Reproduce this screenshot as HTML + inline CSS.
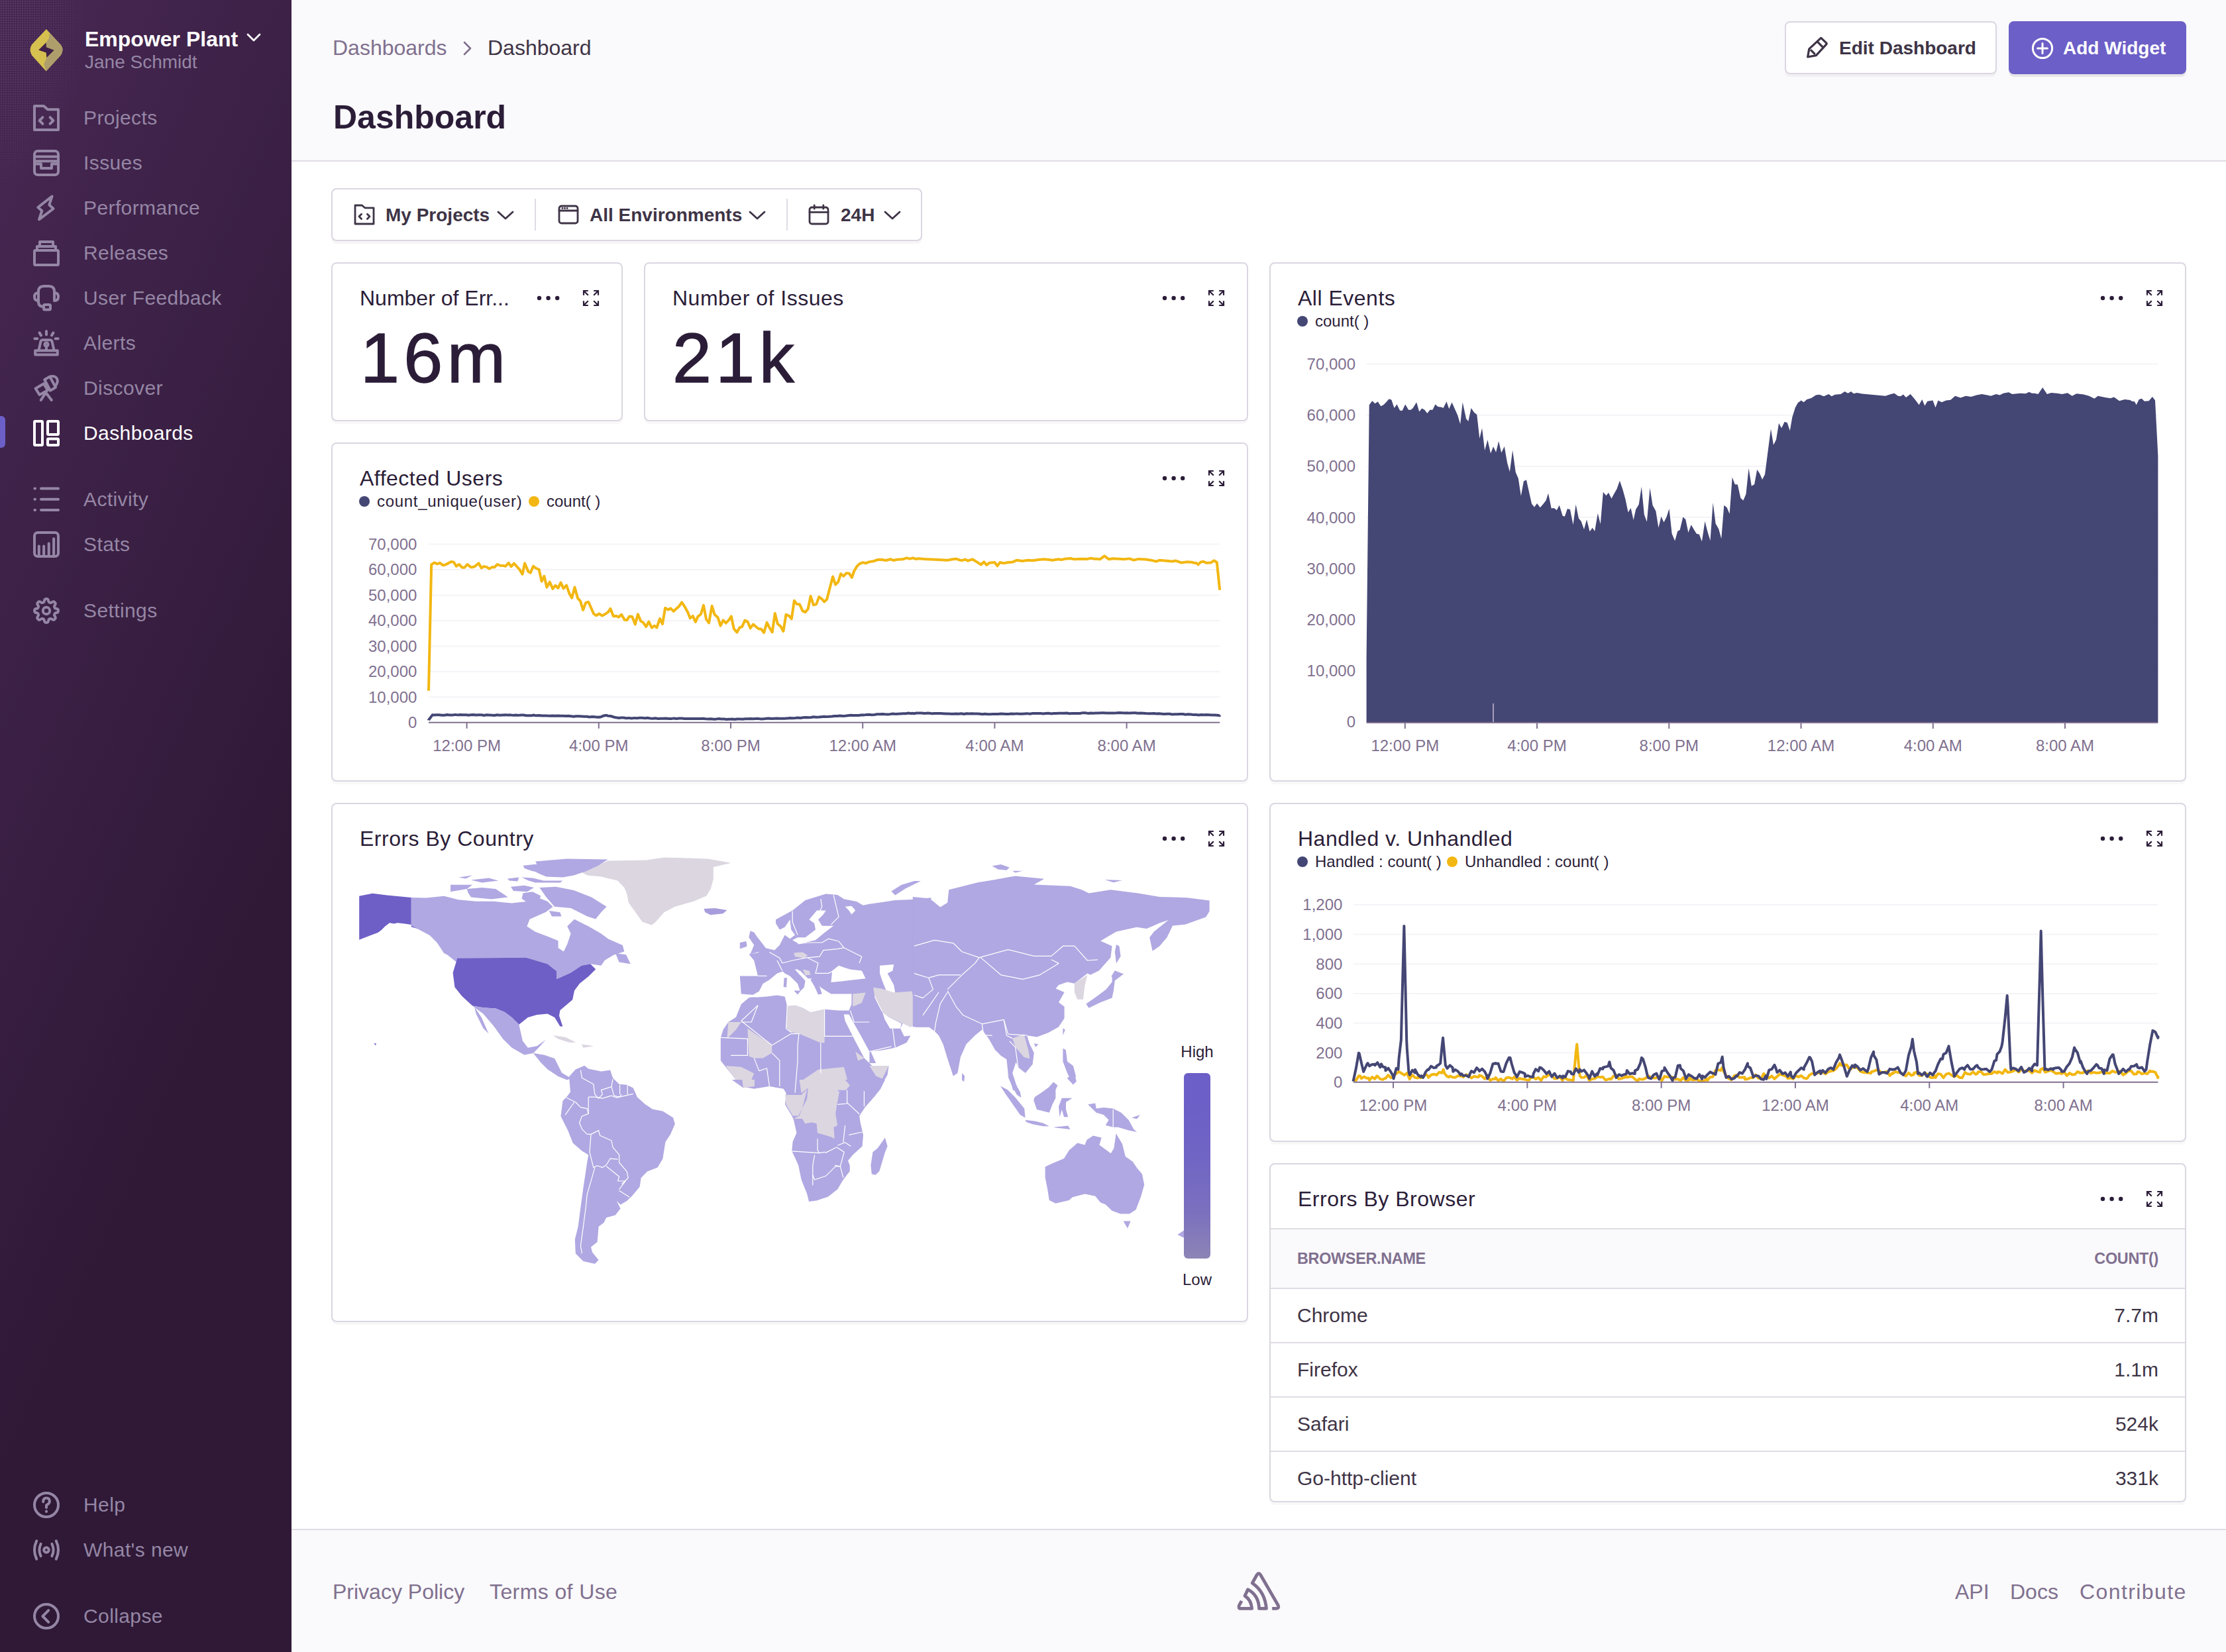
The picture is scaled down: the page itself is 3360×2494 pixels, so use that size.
<!DOCTYPE html>
<html><head><meta charset="utf-8"><style>
html,body{margin:0;padding:0;}
body{width:3360px;height:2494px;overflow:hidden;background:#fff;}
#root{position:relative;width:1680px;height:1247px;zoom:2;overflow:hidden;background:#fff;font-family:"Liberation Sans", sans-serif;}
.t{position:absolute;white-space:nowrap;line-height:1;}
@media (max-width:2500px){body{width:1680px;height:1247px;} #root{zoom:1;}}
svg{display:block;}
</style></head><body><div id="root">
<div style="position:absolute;left:0;top:0;width:220px;height:1247px;background:linear-gradient(294.17deg,#2f1937 35.57%,#452650 92.42%,#452650 92.42%);"></div><div style="position:absolute;left:0;top:0;width:120px;height:170px;background-image:radial-gradient(circle,rgba(170,150,190,0.3) 0.4px,transparent 0.55px);background-size:1.8px 1.8px;-webkit-mask-image:radial-gradient(ellipse 70px 150px at 0 0,#000 0%,rgba(0,0,0,0.6) 50%,transparent 100%);mask-image:radial-gradient(ellipse 70px 150px at 0 0,#000 0%,rgba(0,0,0,0.6) 50%,transparent 100%);"></div><svg style="position:absolute;left:22px;top:22px;overflow:visible" width="27" height="33" viewBox="0 0 27 33"><path d="M12.94 0 L24 12 Q26.5 15.6 24 19.5 L12.8 31.7 L2 19.8 Q-0.5 15.6 2 11.6 Z" fill="#D6C04F"/>
<path d="M15.37 2.87 L24 12 Q26.5 15.6 24 19.5 L12.8 31.7 L11.14 26.37 L12.83 22.56 L13.15 21.51 L18.87 15.9 L12.94 13.57 L12.83 10.18 L14.95 6.9 Z" fill="#AE9E6C"/>
<path d="M7.1 15.7 L12.83 10.18 L12.94 13.57 L18.87 15.9 L13.15 21.51 L12.83 17.8 Z" fill="#3F2149"/></svg><div class="t" style="left:64.00px;top:21.56px;font-size:16px;color:#FFFFFF;font-weight:700;">Empower Plant</div><svg style="position:absolute;left:186px;top:25px;" width="11" height="7" viewBox="0 0 11 7"><path d="M1 1 L5.5 5.5 L10 1" fill="none" stroke="#fff" stroke-width="1.4" stroke-linecap="round" stroke-linejoin="round"/></svg><div class="t" style="left:64.00px;top:40.15px;font-size:14px;color:#9586A5;font-weight:400;">Jane Schmidt</div><svg style="position:absolute;left:25px;top:79px;overflow:visible" width="20" height="20" viewBox="0 0 20 20"><path d="M1 1 H8 L11 3.6 H19 V19 H1 Z" fill="none" stroke="#9586A5" stroke-width="2" stroke-linecap="round" stroke-linejoin="round"/><path d="M7.2 9.6 L4.8 12 L7.2 14.4 M12.8 9.6 L15.2 12 L12.8 14.4" fill="none" stroke="#9586A5" stroke-width="2" stroke-linecap="round" stroke-linejoin="round"/></svg><div class="t" style="left:63.00px;top:81.30px;font-size:15px;color:#9586A5;font-weight:400;letter-spacing:0.2px">Projects</div><svg style="position:absolute;left:25px;top:113px;overflow:visible" width="20" height="20" viewBox="0 0 20 20"><rect x="1" y="1" width="18" height="18" rx="2.5" fill="none" stroke="#9586A5" stroke-width="2" stroke-linecap="round" stroke-linejoin="round"/><path d="M1 5.2 H19 M1 8.6 H19 M1 10.8 H6 V14 H14 V10.8 H19" fill="none" stroke="#9586A5" stroke-width="2" stroke-linecap="round" stroke-linejoin="round"/></svg><div class="t" style="left:63.00px;top:115.30px;font-size:15px;color:#9586A5;font-weight:400;letter-spacing:0.2px">Issues</div><svg style="position:absolute;left:25px;top:147px;overflow:visible" width="20" height="20" viewBox="0 0 20 20"><path d="M14.3 1.2 L3.66 9.5 L6.65 12.15 L4.5 18.65 L15.3 10.5 L12.15 7.66 Z" fill="none" stroke="#9586A5" stroke-width="2" stroke-linecap="round" stroke-linejoin="round"/></svg><div class="t" style="left:63.00px;top:149.30px;font-size:15px;color:#9586A5;font-weight:400;letter-spacing:0.2px">Performance</div><svg style="position:absolute;left:25px;top:181px;overflow:visible" width="20" height="20" viewBox="0 0 20 20"><rect x="1" y="8" width="18" height="11" rx="0.8" fill="none" stroke="#9586A5" stroke-width="2" stroke-linecap="round" stroke-linejoin="round"/><path d="M3 8 V5 H17 V8 M5 5 V1.5 H15 V5" fill="none" stroke="#9586A5" stroke-width="2" stroke-linecap="round" stroke-linejoin="round"/></svg><div class="t" style="left:63.00px;top:183.30px;font-size:15px;color:#9586A5;font-weight:400;letter-spacing:0.2px">Releases</div><svg style="position:absolute;left:25px;top:215px;overflow:visible" width="20" height="20" viewBox="0 0 20 20"><path d="M4 13 V5 Q4 1 8 1 H12 Q16 1 16 5 V11" fill="none" stroke="#9586A5" stroke-width="2" stroke-linecap="round" stroke-linejoin="round"/><path d="M4 6 Q1 6 1 9 Q1 12 4 12 M16 6 Q19 6 19 9 Q19 12 16 12" fill="none" stroke="#9586A5" stroke-width="2" stroke-linecap="round" stroke-linejoin="round"/><path d="M4 13 Q4 16.5 8 16.5" fill="none" stroke="#9586A5" stroke-width="2" stroke-linecap="round" stroke-linejoin="round"/><rect x="8" y="15" width="5" height="3.8" rx="0.8" fill="none" stroke="#9586A5" stroke-width="2" stroke-linecap="round" stroke-linejoin="round"/></svg><div class="t" style="left:63.00px;top:217.30px;font-size:15px;color:#9586A5;font-weight:400;letter-spacing:0.2px">User Feedback</div><svg style="position:absolute;left:25px;top:249px;overflow:visible" width="20" height="20" viewBox="0 0 20 20"><path d="M1.6 18.8 H18.4 V15.6 H1.6 Z" fill="none" stroke="#9586A5" stroke-width="2" stroke-linecap="round" stroke-linejoin="round"/><path d="M4.2 15.6 L5.7 8.8 Q6 7.6 7.2 7.6 H12.8 Q14 7.6 14.3 8.8 L15.8 15.6" fill="none" stroke="#9586A5" stroke-width="2" stroke-linecap="round" stroke-linejoin="round"/><circle cx="10" cy="11" r="1.3" fill="none" stroke="#9586A5" stroke-width="2" stroke-linecap="round" stroke-linejoin="round"/><path d="M10 12.4 V15.2 M10 1 V3.6 M4.8 2.2 L6 4.2 M15.2 2.2 L14 4.2 M1.2 6.6 H3.2 M16.8 6.6 H18.8" fill="none" stroke="#9586A5" stroke-width="2" stroke-linecap="round" stroke-linejoin="round"/></svg><div class="t" style="left:63.00px;top:251.30px;font-size:15px;color:#9586A5;font-weight:400;letter-spacing:0.2px">Alerts</div><svg style="position:absolute;left:25px;top:283px;overflow:visible" width="20" height="20" viewBox="0 0 20 20"><path d="M1.8 10.2 L8 6.6 L11 11.6 L4.8 15 Z M8.6 3.6 L12.6 1.3 L17 9.4 L13 11.8 Z M13.4 1.1 Q18.6 0.6 18.4 5.2 L17.4 7.6 M9.4 13.6 L5.9 19 M9.8 13.6 L13.9 19" fill="none" stroke="#9586A5" stroke-width="2" stroke-linecap="round" stroke-linejoin="round"/></svg><div class="t" style="left:63.00px;top:285.30px;font-size:15px;color:#9586A5;font-weight:400;letter-spacing:0.2px">Discover</div><div style="position:absolute;left:0px;top:314px;width:4px;height:24px;background:#6C5FC7;border-radius:0 3px 3px 0"></div><svg style="position:absolute;left:25px;top:317px;overflow:visible" width="20" height="20" viewBox="0 0 20 20"><rect x="1" y="1" width="6" height="18" rx="0.6" fill="none" stroke="#FFFFFF" stroke-width="2" stroke-linecap="round" stroke-linejoin="round"/><rect x="11" y="1" width="8" height="10" rx="0.6" fill="none" stroke="#FFFFFF" stroke-width="2" stroke-linecap="round" stroke-linejoin="round"/><rect x="11" y="14.2" width="8" height="4.8" rx="0.6" fill="none" stroke="#FFFFFF" stroke-width="2" stroke-linecap="round" stroke-linejoin="round"/></svg><div class="t" style="left:63.00px;top:319.30px;font-size:15px;color:#FFFFFF;font-weight:400;letter-spacing:0.2px">Dashboards</div><svg style="position:absolute;left:25px;top:367px;overflow:visible" width="20" height="20" viewBox="0 0 20 20"><path d="M6 1.8 H19 M6 9.9 H19 M6 18 H19" fill="none" stroke="#9586A5" stroke-width="2" stroke-linecap="round" stroke-linejoin="round"/><path d="M1.2 1.8 h0.3 M1.2 9.9 h0.3 M1.2 18 h0.3" fill="none" stroke="#9586A5" stroke-width="2" stroke-linecap="round" stroke-linejoin="round"/></svg><div class="t" style="left:63.00px;top:369.30px;font-size:15px;color:#9586A5;font-weight:400;letter-spacing:0.2px">Activity</div><svg style="position:absolute;left:25px;top:401px;overflow:visible" width="20" height="20" viewBox="0 0 20 20"><rect x="1" y="1" width="18" height="18" rx="2.5" fill="none" stroke="#9586A5" stroke-width="2" stroke-linecap="round" stroke-linejoin="round"/><path d="M4.4 19 V11.2 M8.07 19 V11.2 M11.85 19 V9.2 M15.57 19 V5.6" fill="none" stroke="#9586A5" stroke-width="2" stroke-linecap="round" stroke-linejoin="round"/></svg><div class="t" style="left:63.00px;top:403.30px;font-size:15px;color:#9586A5;font-weight:400;letter-spacing:0.2px">Stats</div><svg style="position:absolute;left:25px;top:451px;overflow:visible" width="20" height="20" viewBox="0 0 20 20"><circle cx="10" cy="10" r="2.6" fill="none" stroke="#9586A5" stroke-width="2" stroke-linecap="round" stroke-linejoin="round"/><path d="M10.00 1.05 L10.44 1.08 L10.87 1.20 L11.25 1.57 L11.52 2.35 L11.72 3.14 L11.96 3.53 L12.25 3.72 L12.54 3.86 L12.85 3.97 L13.19 4.04 L13.64 3.93 L14.33 3.51 L15.08 3.15 L15.61 3.17 L16.00 3.38 L16.33 3.67 L16.62 4.00 L16.83 4.39 L16.85 4.92 L16.49 5.67 L16.07 6.36 L15.96 6.81 L16.03 7.15 L16.14 7.46 L16.28 7.75 L16.47 8.04 L16.86 8.28 L17.65 8.48 L18.43 8.75 L18.80 9.13 L18.92 9.56 L18.95 10.00 L18.92 10.44 L18.80 10.87 L18.43 11.25 L17.65 11.52 L16.86 11.72 L16.47 11.96 L16.28 12.25 L16.14 12.54 L16.03 12.85 L15.96 13.19 L16.07 13.64 L16.49 14.33 L16.85 15.08 L16.83 15.61 L16.62 16.00 L16.33 16.33 L16.00 16.62 L15.61 16.83 L15.08 16.85 L14.33 16.49 L13.64 16.07 L13.19 15.96 L12.85 16.03 L12.54 16.14 L12.25 16.28 L11.96 16.47 L11.72 16.86 L11.52 17.65 L11.25 18.43 L10.87 18.80 L10.44 18.92 L10.00 18.95 L9.56 18.92 L9.13 18.80 L8.75 18.43 L8.48 17.65 L8.28 16.86 L8.04 16.47 L7.75 16.28 L7.46 16.14 L7.15 16.03 L6.81 15.96 L6.36 16.07 L5.67 16.49 L4.92 16.85 L4.39 16.83 L4.00 16.62 L3.67 16.33 L3.38 16.00 L3.17 15.61 L3.15 15.08 L3.51 14.33 L3.93 13.64 L4.04 13.19 L3.97 12.85 L3.86 12.54 L3.72 12.25 L3.53 11.96 L3.14 11.72 L2.35 11.52 L1.57 11.25 L1.20 10.87 L1.08 10.44 L1.05 10.00 L1.08 9.56 L1.20 9.13 L1.57 8.75 L2.35 8.48 L3.14 8.28 L3.53 8.04 L3.72 7.75 L3.86 7.46 L3.97 7.15 L4.04 6.81 L3.93 6.36 L3.51 5.67 L3.15 4.92 L3.17 4.39 L3.38 4.00 L3.67 3.67 L4.00 3.38 L4.39 3.17 L4.92 3.15 L5.67 3.51 L6.36 3.93 L6.81 4.04 L7.15 3.97 L7.46 3.86 L7.75 3.72 L8.04 3.53 L8.28 3.14 L8.48 2.35 L8.75 1.57 L9.13 1.20 L9.56 1.08 Z" fill="none" stroke="#9586A5" stroke-width="2" stroke-linecap="round" stroke-linejoin="round"/></svg><div class="t" style="left:63.00px;top:453.30px;font-size:15px;color:#9586A5;font-weight:400;letter-spacing:0.2px">Settings</div><svg style="position:absolute;left:25px;top:1126px;overflow:visible" width="20" height="20" viewBox="0 0 20 20"><circle cx="10" cy="10" r="9" fill="none" stroke="#9586A5" stroke-width="2" stroke-linecap="round" stroke-linejoin="round"/><path d="M7.6 7.6 Q7.6 4.8 10 4.8 Q12.4 4.8 12.4 7.4 Q12.4 9 10 10.2 V12" fill="none" stroke="#9586A5" stroke-width="2" stroke-linecap="round" stroke-linejoin="round"/><path d="M10 14.8 v0.2" fill="none" stroke="#9586A5" stroke-width="2" stroke-linecap="round" stroke-linejoin="round"/></svg><div class="t" style="left:63.00px;top:1128.30px;font-size:15px;color:#9586A5;font-weight:400;letter-spacing:0.2px">Help</div><svg style="position:absolute;left:25px;top:1160px;overflow:visible" width="20" height="20" viewBox="0 0 20 20"><circle cx="10" cy="10" r="1.9" fill="none" stroke="#9586A5" stroke-width="2" stroke-linecap="round" stroke-linejoin="round"/><path d="M5.8 5.4 Q3.6 10 5.8 14.6 M14.2 5.4 Q16.4 10 14.2 14.6 M2.6 3.2 Q-0.6 10 2.6 16.8 M17.4 3.2 Q20.6 10 17.4 16.8" fill="none" stroke="#9586A5" stroke-width="2" stroke-linecap="round" stroke-linejoin="round"/></svg><div class="t" style="left:63.00px;top:1162.30px;font-size:15px;color:#9586A5;font-weight:400;letter-spacing:0.2px">What's new</div><svg style="position:absolute;left:25px;top:1210px;overflow:visible" width="20" height="20" viewBox="0 0 20 20"><circle cx="10" cy="10" r="9" fill="none" stroke="#9586A5" stroke-width="2" stroke-linecap="round" stroke-linejoin="round"/><path d="M11.6 5.6 L7.2 10 L11.6 14.4" fill="none" stroke="#9586A5" stroke-width="2" stroke-linecap="round" stroke-linejoin="round"/></svg><div class="t" style="left:63.00px;top:1212.30px;font-size:15px;color:#9586A5;font-weight:400;letter-spacing:0.2px">Collapse</div><div style="position:absolute;left:220px;top:0px;width:1460px;height:121px;background:#FAF9FB;border-bottom:1px solid #E0DCE5"></div><div class="t" style="left:251.00px;top:27.96px;font-size:16px;color:#80708F;font-weight:400;">Dashboards</div><svg style="position:absolute;left:349px;top:31px;" width="8" height="11" viewBox="0 0 8 11"><path d="M1.5 1 L6 5.5 L1.5 10" fill="none" stroke="#80708F" stroke-width="1.3" stroke-linecap="round" stroke-linejoin="round"/></svg><div class="t" style="left:368.00px;top:27.96px;font-size:16px;color:#3E3446;font-weight:400;">Dashboard</div><div class="t" style="left:251.50px;top:76.04px;font-size:25px;color:#2B1D38;font-weight:700;">Dashboard</div><div style="position:absolute;left:1347px;top:16px;width:160px;height:40px;background:#fff;border:1px solid #DBD6E1;border-radius:4px;box-sizing:border-box;box-shadow:0 2px 0 rgba(43,34,51,0.04)"></div><svg style="position:absolute;left:1363px;top:28px;overflow:visible" width="17" height="17" viewBox="0 0 17 17"><path d="M1.32 15 L2.38 8.95 L11 0.9 Q11.3 0.6 11.7 0.9 L15.5 4.6 Q15.8 5 15.5 5.3 L7.68 13.82 Z M3.44 9.58 L6.83 12.97 M8.95 3.86 L12.55 7.47" fill="none" stroke="#3E3446" stroke-width="1.6" stroke-linejoin="round"/></svg><div class="t" style="left:1388.00px;top:29.65px;font-size:14px;color:#3E3446;font-weight:700;">Edit Dashboard</div><div style="position:absolute;left:1516px;top:16px;width:134px;height:40px;background:#6C5FC7;border-radius:4px;box-shadow:0 2px 0 rgba(0,0,0,0.08)"></div><svg style="position:absolute;left:1533px;top:28px;" width="17" height="17" viewBox="0 0 17 17"><circle cx="8.5" cy="8.5" r="7.3" fill="none" stroke="#fff" stroke-width="1.5"/><path d="M8.5 4.8 V12.2 M4.8 8.5 H12.2" fill="none" stroke="#fff" stroke-width="1.5" stroke-linecap="round"/></svg><div class="t" style="left:1557.00px;top:29.65px;font-size:14px;color:#FFFFFF;font-weight:700;">Add Widget</div><div style="position:absolute;left:250px;top:142px;width:446px;height:40px;background:#fff;border:1px solid #DBD6E1;border-radius:4px;box-sizing:border-box;box-shadow:0 2px 0 rgba(43,34,51,0.04)"></div><svg style="position:absolute;left:267px;top:154px;" width="16" height="16" viewBox="0 0 16 16"><path d="M1 1 H6.2 L8.4 2.9 H15 V15 H1 Z" fill="none" stroke="#3E3446" stroke-width="1.4" stroke-linecap="round" stroke-linejoin="round"/><path d="M5.8 7.6 L4 9.4 L5.8 11.2 M10.2 7.6 L12 9.4 L10.2 11.2" fill="none" stroke="#3E3446" stroke-width="1.4" stroke-linecap="round" stroke-linejoin="round"/></svg><div class="t" style="left:291.00px;top:155.55px;font-size:14px;color:#3E3446;font-weight:700;">My Projects</div><svg style="position:absolute;left:375px;top:159px;" width="13" height="7" viewBox="0 0 13 7"><path d="M1 1 L6.5 6 L12 1" fill="none" stroke="#3E3446" stroke-width="1.4" stroke-linecap="round" stroke-linejoin="round"/></svg><div style="position:absolute;left:403.5px;top:150px;width:1px;height:24px;background:#E0DCE5"></div><svg style="position:absolute;left:421px;top:154px;" width="16" height="16" viewBox="0 0 16 16"><rect x="1" y="1.5" width="14" height="13" rx="1.8" fill="none" stroke="#3E3446" stroke-width="1.4" stroke-linecap="round" stroke-linejoin="round"/><path d="M1 5 H15" fill="none" stroke="#3E3446" stroke-width="1.4" stroke-linecap="round" stroke-linejoin="round"/><path d="M3.4 3.2 h0.1 M5.2 3.2 h0.1 M7 3.2 h0.1" fill="none" stroke="#3E3446" stroke-width="1.4" stroke-linecap="round" stroke-linejoin="round"/></svg><div class="t" style="left:445.00px;top:155.55px;font-size:14px;color:#3E3446;font-weight:700;">All Environments</div><svg style="position:absolute;left:565px;top:159px;" width="13" height="7" viewBox="0 0 13 7"><path d="M1 1 L6.5 6 L12 1" fill="none" stroke="#3E3446" stroke-width="1.4" stroke-linecap="round" stroke-linejoin="round"/></svg><div style="position:absolute;left:593.5px;top:150px;width:1px;height:24px;background:#E0DCE5"></div><svg style="position:absolute;left:610px;top:154px;" width="16" height="16" viewBox="0 0 16 16"><rect x="1" y="2.5" width="14" height="12.5" rx="1.8" fill="none" stroke="#3E3446" stroke-width="1.4" stroke-linecap="round" stroke-linejoin="round"/><path d="M1 6.2 H15 M4.6 1 V3.6 M11.4 1 V3.6" fill="none" stroke="#3E3446" stroke-width="1.4" stroke-linecap="round" stroke-linejoin="round"/></svg><div class="t" style="left:634.50px;top:155.55px;font-size:14px;color:#3E3446;font-weight:700;">24H</div><svg style="position:absolute;left:667px;top:159px;" width="13" height="7" viewBox="0 0 13 7"><path d="M1 1 L6.5 6 L12 1" fill="none" stroke="#3E3446" stroke-width="1.4" stroke-linecap="round" stroke-linejoin="round"/></svg><div style="position:absolute;left:250px;top:198px;width:220px;height:120px;background:#fff;border:1px solid #DBD6E1;border-radius:4px;box-sizing:border-box;box-shadow:0 2px 0 rgba(43,34,51,0.03)"></div><div class="t" style="left:271.50px;top:217.06px;font-size:16px;color:#2B1D38;font-weight:400;letter-spacing:0px">Number of Err...</div><svg style="position:absolute;left:404px;top:221px" width="20" height="8" viewBox="0 0 20 8"><circle cx="3" cy="4" r="1.6" fill="#2B1D38"/><circle cx="9.8" cy="4" r="1.6" fill="#2B1D38"/><circle cx="16.6" cy="4" r="1.6" fill="#2B1D38"/></svg><svg style="position:absolute;left:439px;top:218px" width="14" height="14" viewBox="0 0 14 14"><path d="M1.5 4.9 V1.5 H4.9 M1.5 1.5 L4.9 4.9 M12.5 4.9 V1.5 H9.1 M12.5 1.5 L9.1 4.9 M1.5 9.1 V12.5 H4.9 M1.5 12.5 L4.9 9.1 M12.5 9.1 V12.5 H9.1 M12.5 12.5 L9.1 9.1" fill="none" stroke="#2B1D38" stroke-width="1.1"/></svg><div class="t" style="left:272.00px;top:243.74px;font-size:53px;color:#2B1D38;font-weight:400;letter-spacing:3.2px;-webkit-text-stroke:0.7px #2B1D38">16m</div><div style="position:absolute;left:486px;top:198px;width:456px;height:120px;background:#fff;border:1px solid #DBD6E1;border-radius:4px;box-sizing:border-box;box-shadow:0 2px 0 rgba(43,34,51,0.03)"></div><div class="t" style="left:507.50px;top:217.06px;font-size:16px;color:#2B1D38;font-weight:400;letter-spacing:0.25px">Number of Issues</div><svg style="position:absolute;left:876px;top:221px" width="20" height="8" viewBox="0 0 20 8"><circle cx="3" cy="4" r="1.6" fill="#2B1D38"/><circle cx="9.8" cy="4" r="1.6" fill="#2B1D38"/><circle cx="16.6" cy="4" r="1.6" fill="#2B1D38"/></svg><svg style="position:absolute;left:911px;top:218px" width="14" height="14" viewBox="0 0 14 14"><path d="M1.5 4.9 V1.5 H4.9 M1.5 1.5 L4.9 4.9 M12.5 4.9 V1.5 H9.1 M12.5 1.5 L9.1 4.9 M1.5 9.1 V12.5 H4.9 M1.5 12.5 L4.9 9.1 M12.5 9.1 V12.5 H9.1 M12.5 12.5 L9.1 9.1" fill="none" stroke="#2B1D38" stroke-width="1.1"/></svg><div class="t" style="left:507.50px;top:243.74px;font-size:53px;color:#2B1D38;font-weight:400;letter-spacing:3.2px;-webkit-text-stroke:0.7px #2B1D38">21k</div><div style="position:absolute;left:958px;top:198px;width:692px;height:392px;background:#fff;border:1px solid #DBD6E1;border-radius:4px;box-sizing:border-box;box-shadow:0 2px 0 rgba(43,34,51,0.03)"></div><div class="t" style="left:979.50px;top:217.06px;font-size:16px;color:#2B1D38;font-weight:400;letter-spacing:0.25px">All Events</div><svg style="position:absolute;left:1584px;top:221px" width="20" height="8" viewBox="0 0 20 8"><circle cx="3" cy="4" r="1.6" fill="#2B1D38"/><circle cx="9.8" cy="4" r="1.6" fill="#2B1D38"/><circle cx="16.6" cy="4" r="1.6" fill="#2B1D38"/></svg><svg style="position:absolute;left:1619px;top:218px" width="14" height="14" viewBox="0 0 14 14"><path d="M1.5 4.9 V1.5 H4.9 M1.5 1.5 L4.9 4.9 M12.5 4.9 V1.5 H9.1 M12.5 1.5 L9.1 4.9 M1.5 9.1 V12.5 H4.9 M1.5 12.5 L4.9 9.1 M12.5 9.1 V12.5 H9.1 M12.5 12.5 L9.1 9.1" fill="none" stroke="#2B1D38" stroke-width="1.1"/></svg><div style="position:absolute;left:979px;top:238.5px;width:8px;height:8px;border-radius:50%;background:#444674"></div><div class="t" style="left:992.50px;top:236.34px;font-size:12px;color:#2B1D38;font-weight:400;">count( )</div><div style="position:absolute;left:250px;top:334px;width:692px;height:256px;background:#fff;border:1px solid #DBD6E1;border-radius:4px;box-sizing:border-box;box-shadow:0 2px 0 rgba(43,34,51,0.03)"></div><div class="t" style="left:271.50px;top:353.06px;font-size:16px;color:#2B1D38;font-weight:400;letter-spacing:0.25px">Affected Users</div><svg style="position:absolute;left:876px;top:357px" width="20" height="8" viewBox="0 0 20 8"><circle cx="3" cy="4" r="1.6" fill="#2B1D38"/><circle cx="9.8" cy="4" r="1.6" fill="#2B1D38"/><circle cx="16.6" cy="4" r="1.6" fill="#2B1D38"/></svg><svg style="position:absolute;left:911px;top:354px" width="14" height="14" viewBox="0 0 14 14"><path d="M1.5 4.9 V1.5 H4.9 M1.5 1.5 L4.9 4.9 M12.5 4.9 V1.5 H9.1 M12.5 1.5 L9.1 4.9 M1.5 9.1 V12.5 H4.9 M1.5 12.5 L4.9 9.1 M12.5 9.1 V12.5 H9.1 M12.5 12.5 L9.1 9.1" fill="none" stroke="#2B1D38" stroke-width="1.1"/></svg><div style="position:absolute;left:271px;top:374.5px;width:8px;height:8px;border-radius:50%;background:#444674"></div><div class="t" style="left:284.50px;top:372.34px;font-size:12px;color:#2B1D38;font-weight:400;letter-spacing:0.35px">count_unique(user)</div><div style="position:absolute;left:399px;top:374.5px;width:8px;height:8px;border-radius:50%;background:#F2B712"></div><div class="t" style="left:412.50px;top:372.34px;font-size:12px;color:#2B1D38;font-weight:400;">count( )</div><div style="position:absolute;left:250px;top:606px;width:692px;height:392px;background:#fff;border:1px solid #DBD6E1;border-radius:4px;box-sizing:border-box;box-shadow:0 2px 0 rgba(43,34,51,0.03)"></div><div class="t" style="left:271.50px;top:625.06px;font-size:16px;color:#2B1D38;font-weight:400;letter-spacing:0.25px">Errors By Country</div><svg style="position:absolute;left:876px;top:629px" width="20" height="8" viewBox="0 0 20 8"><circle cx="3" cy="4" r="1.6" fill="#2B1D38"/><circle cx="9.8" cy="4" r="1.6" fill="#2B1D38"/><circle cx="16.6" cy="4" r="1.6" fill="#2B1D38"/></svg><svg style="position:absolute;left:911px;top:626px" width="14" height="14" viewBox="0 0 14 14"><path d="M1.5 4.9 V1.5 H4.9 M1.5 1.5 L4.9 4.9 M12.5 4.9 V1.5 H9.1 M12.5 1.5 L9.1 4.9 M1.5 9.1 V12.5 H4.9 M1.5 12.5 L4.9 9.1 M12.5 9.1 V12.5 H9.1 M12.5 12.5 L9.1 9.1" fill="none" stroke="#2B1D38" stroke-width="1.1"/></svg><div style="position:absolute;left:958px;top:606px;width:692px;height:256px;background:#fff;border:1px solid #DBD6E1;border-radius:4px;box-sizing:border-box;box-shadow:0 2px 0 rgba(43,34,51,0.03)"></div><div class="t" style="left:979.50px;top:625.06px;font-size:16px;color:#2B1D38;font-weight:400;letter-spacing:0.25px">Handled v. Unhandled</div><svg style="position:absolute;left:1584px;top:629px" width="20" height="8" viewBox="0 0 20 8"><circle cx="3" cy="4" r="1.6" fill="#2B1D38"/><circle cx="9.8" cy="4" r="1.6" fill="#2B1D38"/><circle cx="16.6" cy="4" r="1.6" fill="#2B1D38"/></svg><svg style="position:absolute;left:1619px;top:626px" width="14" height="14" viewBox="0 0 14 14"><path d="M1.5 4.9 V1.5 H4.9 M1.5 1.5 L4.9 4.9 M12.5 4.9 V1.5 H9.1 M12.5 1.5 L9.1 4.9 M1.5 9.1 V12.5 H4.9 M1.5 12.5 L4.9 9.1 M12.5 9.1 V12.5 H9.1 M12.5 12.5 L9.1 9.1" fill="none" stroke="#2B1D38" stroke-width="1.1"/></svg><div style="position:absolute;left:979px;top:646.5px;width:8px;height:8px;border-radius:50%;background:#444674"></div><div class="t" style="left:992.50px;top:644.34px;font-size:12px;color:#2B1D38;font-weight:400;">Handled : count( )</div><div style="position:absolute;left:1092px;top:646.5px;width:8px;height:8px;border-radius:50%;background:#F2B712"></div><div class="t" style="left:1105.50px;top:644.34px;font-size:12px;color:#2B1D38;font-weight:400;">Unhandled : count( )</div><div style="position:absolute;left:958px;top:878px;width:692px;height:256px;background:#fff;border:1px solid #DBD6E1;border-radius:4px;box-sizing:border-box;box-shadow:0 2px 0 rgba(43,34,51,0.03)"></div><div class="t" style="left:979.50px;top:897.06px;font-size:16px;color:#2B1D38;font-weight:400;letter-spacing:0.25px">Errors By Browser</div><svg style="position:absolute;left:1584px;top:901px" width="20" height="8" viewBox="0 0 20 8"><circle cx="3" cy="4" r="1.6" fill="#2B1D38"/><circle cx="9.8" cy="4" r="1.6" fill="#2B1D38"/><circle cx="16.6" cy="4" r="1.6" fill="#2B1D38"/></svg><svg style="position:absolute;left:1619px;top:898px" width="14" height="14" viewBox="0 0 14 14"><path d="M1.5 4.9 V1.5 H4.9 M1.5 1.5 L4.9 4.9 M12.5 4.9 V1.5 H9.1 M12.5 1.5 L9.1 4.9 M1.5 9.1 V12.5 H4.9 M1.5 12.5 L4.9 9.1 M12.5 9.1 V12.5 H9.1 M12.5 12.5 L9.1 9.1" fill="none" stroke="#2B1D38" stroke-width="1.1"/></svg><svg style="position:absolute;left:0;top:0;overflow:visible" width="1680" height="1247" viewBox="0 0 1680 1247" font-family="Liberation Sans, sans-serif"><text x="1023.00" y="549.20" text-anchor="end" font-size="12" fill="#80708F">0</text><path d="M1031.30 506.39 H1628.70" stroke="#F5F3F7" stroke-width="1" fill="none"/><text x="1023.00" y="510.59" text-anchor="end" font-size="12" fill="#80708F">10,000</text><path d="M1031.30 467.78 H1628.70" stroke="#F5F3F7" stroke-width="1" fill="none"/><text x="1023.00" y="471.98" text-anchor="end" font-size="12" fill="#80708F">20,000</text><path d="M1031.30 429.17 H1628.70" stroke="#F5F3F7" stroke-width="1" fill="none"/><text x="1023.00" y="433.37" text-anchor="end" font-size="12" fill="#80708F">30,000</text><path d="M1031.30 390.56 H1628.70" stroke="#F5F3F7" stroke-width="1" fill="none"/><text x="1023.00" y="394.76" text-anchor="end" font-size="12" fill="#80708F">40,000</text><path d="M1031.30 351.95 H1628.70" stroke="#F5F3F7" stroke-width="1" fill="none"/><text x="1023.00" y="356.15" text-anchor="end" font-size="12" fill="#80708F">50,000</text><path d="M1031.30 313.34 H1628.70" stroke="#F5F3F7" stroke-width="1" fill="none"/><text x="1023.00" y="317.54" text-anchor="end" font-size="12" fill="#80708F">60,000</text><path d="M1031.30 274.73 H1628.70" stroke="#F5F3F7" stroke-width="1" fill="none"/><text x="1023.00" y="278.93" text-anchor="end" font-size="12" fill="#80708F">70,000</text><path d="M1031.30 496.73 L1033.37 305.61 L1035.66 302.64 L1037.82 304.66 L1039.84 303.18 L1042.13 306.68 L1044.15 305.61 L1046.17 303.58 L1048.33 301.16 L1050.22 301.83 L1052.24 308.03 L1054.26 305.20 L1056.55 309.92 L1058.30 310.05 L1060.59 305.20 L1063.02 309.38 L1064.77 309.38 L1066.39 308.03 L1069.08 303.58 L1071.11 310.73 L1073.13 308.30 L1075.15 309.38 L1077.17 311.94 L1079.19 309.38 L1081.21 309.38 L1083.23 305.20 L1085.26 306.95 L1087.95 307.36 L1089.30 308.03 L1091.73 303.18 L1093.61 308.57 L1095.77 303.72 L1100.08 313.42 L1102.10 320.16 L1103.85 303.58 L1106.55 316.12 L1108.17 318.01 L1110.32 308.03 L1112.48 311.27 L1114.64 313.02 L1116.66 330.94 L1118.54 323.13 L1120.57 339.97 L1122.72 332.02 L1125.01 342.26 L1127.04 337.14 L1129.06 341.32 L1131.08 332.96 L1133.10 341.73 L1135.39 337.01 L1137.55 349.41 L1139.43 356.15 L1141.59 339.84 L1143.88 356.55 L1145.90 361.13 L1147.92 374.34 L1149.95 363.29 L1151.97 362.21 L1156.01 380.40 L1158.03 382.70 L1160.05 380.00 L1162.35 383.10 L1164.77 380.40 L1166.79 377.71 L1168.54 372.32 L1170.84 383.77 L1172.86 383.50 L1174.88 385.12 L1176.90 381.35 L1179.33 389.43 L1180.94 389.84 L1182.96 384.04 L1184.99 384.58 L1187.28 396.17 L1189.30 380.81 L1191.46 391.19 L1193.34 393.48 L1195.50 399.68 L1197.52 392.13 L1199.81 401.29 L1201.83 398.33 L1203.58 401.02 L1205.88 387.55 L1207.90 395.63 L1209.92 371.37 L1212.21 374.07 L1213.96 371.91 L1216.25 376.36 L1218.01 372.99 L1220.30 368.95 L1222.45 362.88 L1224.74 369.62 L1226.77 377.04 L1228.79 386.74 L1230.81 383.50 L1232.83 392.53 L1234.58 384.45 L1236.87 380.81 L1238.89 367.33 L1240.92 388.49 L1242.94 393.88 L1245.23 368.27 L1247.25 381.35 L1249.68 385.80 L1251.70 398.33 L1253.72 389.84 L1255.74 394.29 L1257.76 390.24 L1259.78 384.04 L1261.81 402.91 L1264.10 408.30 L1266.12 401.02 L1267.87 399.95 L1270.16 390.24 L1272.18 392.13 L1274.20 401.97 L1276.36 396.17 L1278.38 399.68 L1280.40 402.91 L1282.43 403.32 L1284.45 408.71 L1286.74 393.48 L1288.76 401.56 L1290.78 408.03 L1292.80 379.46 L1294.82 395.23 L1297.12 399.27 L1299.14 406.68 L1301.16 381.35 L1303.32 383.10 L1305.34 387.82 L1307.36 360.19 L1309.38 365.58 L1311.40 365.71 L1313.69 375.96 L1315.71 377.71 L1317.74 372.99 L1319.76 353.45 L1321.91 366.93 L1324.07 365.58 L1326.09 354.53 L1328.11 357.49 L1330.00 361.94 L1332.02 358.17 L1336.47 323.80 L1338.49 335.93 L1340.51 331.89 L1342.53 319.49 L1344.56 323.13 L1346.85 318.41 L1348.87 319.08 L1350.89 325.15 L1352.64 315.04 L1354.93 307.63 L1356.95 303.99 L1359.38 302.24 L1361.27 303.58 L1363.69 301.56 L1367.06 300.49 L1370.43 298.19 L1373.13 297.92 L1376.50 299.14 L1380.13 297.52 L1382.29 299.14 L1384.99 297.92 L1389.30 297.52 L1392.26 295.50 L1394.69 296.85 L1396.98 295.50 L1399.00 297.12 L1401.43 296.44 L1405.47 297.25 L1410.86 297.79 L1416.25 298.19 L1422.99 298.87 L1427.04 297.52 L1429.73 296.85 L1432.43 298.87 L1434.45 299.14 L1436.47 297.79 L1438.49 299.95 L1441.86 297.52 L1445.23 301.56 L1448.33 305.61 L1450.62 301.56 L1452.64 306.28 L1454.66 302.91 L1458.71 302.24 L1460.73 307.63 L1462.75 302.24 L1465.44 303.58 L1468.81 302.24 L1472.18 301.83 L1475.55 298.87 L1479.60 300.22 L1483.64 298.87 L1487.68 299.54 L1491.73 298.19 L1495.77 297.52 L1499.81 298.19 L1502.51 298.87 L1506.55 297.52 L1509.25 298.19 L1511.94 296.85 L1515.98 296.17 L1518.68 297.52 L1524.74 296.85 L1528.79 297.12 L1531.48 295.90 L1533.50 296.85 L1535.53 296.85 L1538.22 297.52 L1541.59 292.53 L1544.96 297.52 L1548.06 296.44 L1552.37 296.85 L1556.42 297.52 L1560.46 296.58 L1563.83 298.87 L1567.20 297.12 L1572.59 297.79 L1576.63 298.87 L1580.67 300.89 L1583.37 298.87 L1588.76 299.95 L1592.80 300.62 L1595.50 299.81 L1599.54 302.64 L1603.58 301.56 L1607.63 301.97 L1608.98 302.91 L1611.00 303.18 L1612.35 305.61 L1614.37 301.56 L1616.39 300.89 L1618.41 302.91 L1621.78 302.64 L1624.47 299.54 L1626.50 302.24 L1628.70 344.21 L1628.70 545.0 L1031.30 545.0 Z" fill="#444674"/><path d="M1127 531 V545" stroke="#A99DBB" stroke-width="1" fill="none"/><path d="M1031.30 545.50 H1628.70" stroke="#80708F" stroke-width="1" fill="none"/><path d="M1060.40 545.50 V550.00" stroke="#80708F" stroke-width="1" fill="none"/><text x="1060.40" y="567.00" text-anchor="middle" font-size="12" fill="#80708F">12:00 PM</text><path d="M1160.02 545.50 V550.00" stroke="#80708F" stroke-width="1" fill="none"/><text x="1160.02" y="567.00" text-anchor="middle" font-size="12" fill="#80708F">4:00 PM</text><path d="M1259.64 545.50 V550.00" stroke="#80708F" stroke-width="1" fill="none"/><text x="1259.64" y="567.00" text-anchor="middle" font-size="12" fill="#80708F">8:00 PM</text><path d="M1359.26 545.50 V550.00" stroke="#80708F" stroke-width="1" fill="none"/><text x="1359.26" y="567.00" text-anchor="middle" font-size="12" fill="#80708F">12:00 AM</text><path d="M1458.88 545.50 V550.00" stroke="#80708F" stroke-width="1" fill="none"/><text x="1458.88" y="567.00" text-anchor="middle" font-size="12" fill="#80708F">4:00 AM</text><path d="M1558.50 545.50 V550.00" stroke="#80708F" stroke-width="1" fill="none"/><text x="1558.50" y="567.00" text-anchor="middle" font-size="12" fill="#80708F">8:00 AM</text><text x="314.70" y="549.60" text-anchor="end" font-size="12" fill="#80708F">0</text><path d="M323.50 526.17 H920.60" stroke="#F5F3F7" stroke-width="1" fill="none"/><text x="314.70" y="530.37" text-anchor="end" font-size="12" fill="#80708F">10,000</text><path d="M323.50 506.94 H920.60" stroke="#F5F3F7" stroke-width="1" fill="none"/><text x="314.70" y="511.14" text-anchor="end" font-size="12" fill="#80708F">20,000</text><path d="M323.50 487.71 H920.60" stroke="#F5F3F7" stroke-width="1" fill="none"/><text x="314.70" y="491.91" text-anchor="end" font-size="12" fill="#80708F">30,000</text><path d="M323.50 468.48 H920.60" stroke="#F5F3F7" stroke-width="1" fill="none"/><text x="314.70" y="472.68" text-anchor="end" font-size="12" fill="#80708F">40,000</text><path d="M323.50 449.25 H920.60" stroke="#F5F3F7" stroke-width="1" fill="none"/><text x="314.70" y="453.45" text-anchor="end" font-size="12" fill="#80708F">50,000</text><path d="M323.50 430.02 H920.60" stroke="#F5F3F7" stroke-width="1" fill="none"/><text x="314.70" y="434.22" text-anchor="end" font-size="12" fill="#80708F">60,000</text><path d="M323.50 410.79 H920.60" stroke="#F5F3F7" stroke-width="1" fill="none"/><text x="314.70" y="414.99" text-anchor="end" font-size="12" fill="#80708F">70,000</text><path d="M323.50 543.61 L323.50 543.49 L325.49 540.80 L326.35 539.67 L327.48 539.73 L329.47 539.62 L331.46 539.61 L333.45 539.87 L335.44 539.90 L337.43 539.52 L339.42 539.78 L341.41 539.80 L343.40 539.44 L345.39 539.69 L347.38 539.52 L349.37 539.68 L351.36 539.61 L352.33 539.67 L353.36 539.84 L355.35 539.63 L357.34 539.53 L359.33 539.71 L361.32 539.62 L363.31 539.66 L365.30 539.95 L367.29 539.65 L369.28 539.74 L371.27 539.88 L373.26 540.02 L375.25 539.65 L377.24 539.84 L379.23 539.74 L381.22 539.68 L383.21 539.77 L385.20 539.68 L387.19 539.94 L389.18 539.76 L391.17 539.94 L393.16 539.73 L395.15 539.76 L397.14 540.14 L399.13 540.13 L401.12 540.11 L403.11 539.77 L403.32 539.99 L405.10 540.07 L407.09 540.03 L409.08 540.23 L411.07 540.19 L413.06 540.30 L415.06 540.36 L417.05 540.31 L419.04 540.36 L421.03 540.26 L423.02 540.42 L425.01 540.35 L427.00 540.44 L428.99 540.43 L430.98 540.63 L432.97 540.91 L434.96 540.64 L436.95 540.65 L438.94 540.73 L440.93 540.93 L442.92 540.92 L444.91 541.20 L446.90 540.97 L448.89 541.14 L450.88 541.32 L452.42 541.26 L452.87 541.36 L454.86 540.52 L456.85 539.99 L457.81 539.99 L458.84 540.40 L460.83 540.50 L462.82 541.11 L464.81 541.66 L466.68 541.90 L466.80 542.00 L468.79 541.80 L470.78 541.77 L472.77 542.18 L474.77 541.94 L476.76 542.22 L478.75 541.94 L480.74 542.14 L482.73 541.91 L484.72 541.88 L486.71 542.12 L488.70 541.92 L490.69 542.26 L492.68 542.39 L494.67 542.17 L496.66 542.45 L498.65 542.40 L500.64 542.33 L502.63 542.25 L504.62 542.49 L506.61 542.56 L508.60 542.20 L510.59 542.48 L512.58 542.21 L514.57 542.26 L516.56 542.52 L518.55 542.50 L520.54 542.50 L522.53 542.46 L524.52 542.51 L526.51 542.55 L528.50 542.54 L530.49 542.42 L532.49 542.64 L534.48 542.70 L536.47 542.59 L538.46 542.83 L540.45 542.82 L542.44 542.53 L544.43 542.77 L546.42 542.78 L548.41 543.05 L550.40 542.88 L551.25 542.85 L552.39 542.80 L554.38 543.03 L556.37 542.72 L558.36 542.69 L560.35 542.92 L562.34 542.63 L564.33 542.67 L566.32 542.54 L568.31 542.66 L570.30 542.47 L572.29 542.43 L574.28 542.73 L576.27 542.68 L578.26 542.37 L580.25 542.20 L582.24 542.50 L584.23 542.38 L586.22 542.28 L588.21 542.38 L590.20 542.33 L592.19 542.32 L593.38 542.22 L594.19 542.24 L596.18 542.05 L598.17 542.10 L600.16 541.98 L602.15 541.71 L604.14 541.96 L606.13 541.63 L608.12 541.46 L610.11 541.57 L612.10 541.52 L614.09 541.17 L616.08 541.34 L618.07 541.28 L620.06 541.08 L622.05 540.87 L624.04 541.06 L626.03 540.87 L628.02 540.77 L630.01 540.46 L632.00 540.55 L633.99 540.27 L635.98 540.50 L637.97 540.34 L639.96 540.10 L641.95 539.91 L643.94 540.02 L645.93 540.04 L647.92 540.00 L649.91 539.72 L651.35 539.67 L651.90 539.80 L653.90 539.44 L655.89 539.36 L657.88 539.59 L659.87 539.48 L661.86 539.17 L663.85 539.18 L665.84 539.03 L667.83 539.18 L669.82 539.21 L671.81 539.07 L673.80 538.77 L675.79 538.94 L677.78 538.84 L679.77 538.73 L681.76 538.67 L683.75 538.60 L685.74 538.30 L687.73 538.58 L688.41 538.40 L689.72 538.64 L691.71 538.23 L693.70 538.28 L695.69 538.25 L697.68 538.52 L699.67 538.31 L701.66 538.34 L703.65 538.68 L705.64 538.46 L707.63 538.44 L709.62 538.54 L711.62 538.63 L713.61 538.75 L715.60 538.75 L717.59 538.82 L719.58 538.92 L721.57 538.70 L723.56 538.85 L725.55 538.63 L727.54 539.01 L729.53 538.63 L731.52 538.75 L733.51 538.66 L735.50 538.69 L737.49 538.71 L739.48 538.88 L741.47 539.16 L743.46 538.85 L745.45 539.13 L747.44 539.09 L749.43 538.94 L751.13 539.04 L751.42 539.02 L753.41 539.05 L755.40 538.78 L757.39 538.90 L759.38 539.00 L761.37 539.01 L763.36 538.71 L765.35 538.86 L767.34 538.69 L769.33 538.86 L771.33 538.91 L773.32 538.73 L775.31 538.57 L777.30 538.84 L779.29 538.53 L781.28 538.44 L783.27 538.47 L785.26 538.44 L787.25 538.79 L789.24 538.47 L791.23 538.34 L793.22 538.69 L795.21 538.56 L797.20 538.53 L799.19 538.39 L799.28 538.40 L801.18 538.42 L803.17 538.39 L805.16 538.24 L807.15 538.58 L809.14 538.54 L811.13 538.50 L813.12 538.49 L815.11 538.50 L817.10 538.07 L819.09 538.11 L821.08 538.45 L823.07 538.25 L825.06 538.32 L827.05 538.31 L829.04 538.28 L831.04 538.13 L833.03 538.15 L835.02 538.24 L837.01 538.31 L839.00 538.23 L840.99 538.31 L842.98 538.10 L844.97 538.01 L846.96 538.16 L848.95 538.28 L850.28 538.08 L850.94 538.25 L852.93 538.21 L854.92 538.16 L856.91 538.13 L858.90 538.37 L860.89 538.23 L862.88 538.37 L864.87 538.51 L866.86 538.59 L868.85 538.59 L870.84 538.55 L872.83 538.73 L874.82 538.66 L876.81 538.82 L878.80 538.97 L880.79 538.89 L882.78 538.87 L884.77 539.22 L886.76 539.11 L888.75 539.16 L890.75 539.00 L892.74 539.03 L894.73 539.35 L896.72 539.16 L898.71 539.26 L900.70 539.56 L902.69 539.52 L904.68 539.73 L906.67 539.47 L908.66 539.59 L910.65 539.54 L912.64 539.64 L914.63 539.75 L916.62 539.77 L918.61 539.91 L920.60 540.17 L920.60 539.99" stroke="#444674" stroke-width="2" fill="none" stroke-linejoin="round"/><path d="M323.50 521.36 L325.57 426.19 L327.86 424.71 L330.01 425.72 L332.03 424.98 L334.32 426.73 L336.34 426.19 L338.37 425.18 L340.52 423.98 L342.41 424.31 L344.43 427.40 L346.45 425.99 L348.74 428.34 L350.49 428.41 L352.78 425.99 L355.20 428.07 L356.95 428.07 L358.57 427.40 L361.26 425.18 L363.29 428.74 L365.31 427.53 L367.33 428.07 L369.35 429.34 L371.37 428.07 L373.39 428.07 L375.41 425.99 L377.43 426.86 L380.12 427.06 L381.47 427.40 L383.89 424.98 L385.78 427.67 L387.94 425.25 L392.25 430.08 L394.27 433.44 L396.02 425.18 L398.71 431.43 L400.33 432.36 L402.48 427.40 L404.64 429.01 L406.79 429.88 L408.81 438.81 L410.70 434.91 L412.72 443.30 L414.88 439.34 L417.17 444.44 L419.19 441.89 L421.21 443.97 L423.23 439.81 L425.25 444.18 L427.54 441.83 L429.69 448.00 L431.58 451.36 L433.73 443.24 L436.02 451.56 L438.05 453.84 L440.07 460.42 L442.09 454.91 L444.11 454.38 L448.15 463.44 L450.17 464.58 L452.19 463.24 L454.48 464.78 L456.90 463.44 L458.92 462.09 L460.68 459.41 L462.97 465.11 L464.99 464.98 L467.01 465.79 L469.03 463.91 L471.45 467.93 L473.07 468.13 L475.09 465.25 L477.11 465.52 L479.40 471.29 L481.42 463.64 L483.58 468.81 L485.46 469.95 L487.62 473.03 L489.64 469.28 L491.93 473.84 L493.95 472.36 L495.70 473.71 L497.99 466.99 L500.01 471.02 L502.03 458.94 L504.32 460.28 L506.07 459.21 L508.36 461.42 L510.11 459.75 L512.40 457.73 L514.56 454.71 L516.85 458.07 L518.87 461.76 L520.89 466.59 L522.91 464.98 L524.93 469.48 L526.68 465.45 L528.97 463.64 L530.99 456.93 L533.01 467.46 L535.03 470.15 L537.32 457.40 L539.34 463.91 L541.77 466.12 L543.79 472.36 L545.81 468.13 L547.83 470.35 L549.85 468.34 L551.87 465.25 L553.89 474.64 L556.18 477.33 L558.20 473.71 L559.95 473.17 L562.24 468.34 L564.26 469.28 L566.28 474.17 L568.44 471.29 L570.46 473.03 L572.48 474.64 L574.50 474.85 L576.52 477.53 L578.81 469.95 L580.83 473.97 L582.85 477.19 L584.87 462.97 L586.89 470.82 L589.18 472.83 L591.20 476.52 L593.22 463.91 L595.38 464.78 L597.40 467.13 L599.42 453.37 L601.44 456.05 L603.46 456.12 L605.75 461.22 L607.77 462.09 L609.79 459.75 L611.81 450.01 L613.97 456.73 L616.12 456.05 L618.14 450.55 L620.16 452.03 L622.05 454.24 L624.07 452.36 L628.52 435.25 L630.54 441.29 L632.56 439.28 L634.58 433.10 L636.60 434.91 L638.89 432.57 L640.91 432.90 L642.93 435.92 L644.68 430.89 L646.97 427.20 L648.99 425.39 L651.42 424.51 L653.30 425.18 L655.73 424.18 L659.09 423.64 L662.46 422.50 L665.16 422.37 L668.52 422.97 L672.16 422.16 L674.31 422.97 L677.01 422.37 L681.32 422.16 L684.28 421.16 L686.71 421.83 L689.00 421.16 L691.02 421.96 L693.44 421.63 L697.48 422.03 L702.87 422.30 L708.26 422.50 L715.00 422.83 L719.04 422.16 L721.73 421.83 L724.42 422.83 L726.44 422.97 L728.47 422.30 L730.49 423.37 L733.85 422.16 L737.22 424.18 L740.32 426.19 L742.61 424.18 L744.63 426.53 L746.65 424.85 L750.69 424.51 L752.71 427.20 L754.73 424.51 L757.43 425.18 L760.79 424.51 L764.16 424.31 L767.53 422.83 L771.57 423.51 L775.61 422.83 L779.65 423.17 L783.69 422.50 L787.73 422.16 L791.78 422.50 L794.47 422.83 L798.51 422.16 L801.21 422.50 L803.90 421.83 L807.94 421.49 L810.63 422.16 L816.70 421.83 L820.74 421.96 L823.43 421.36 L825.45 421.83 L827.47 421.83 L830.17 422.16 L833.53 419.68 L836.90 422.16 L840.00 421.63 L844.31 421.83 L848.35 422.16 L852.39 421.69 L855.76 422.83 L859.13 421.96 L864.52 422.30 L868.56 422.83 L872.60 423.84 L875.29 422.83 L880.68 423.37 L884.72 423.71 L887.42 423.30 L891.46 424.71 L895.50 424.18 L899.54 424.38 L900.89 424.85 L902.91 424.98 L904.25 426.19 L906.27 424.18 L908.29 423.84 L910.31 424.85 L913.68 424.71 L916.38 423.17 L918.40 424.51 L920.60 445.41" stroke="#F2B712" stroke-width="2" fill="none" stroke-linejoin="round"/><path d="M323.50 545.40 H920.60" stroke="#80708F" stroke-width="1" fill="none"/><path d="M352.30 545.40 V549.90" stroke="#80708F" stroke-width="1" fill="none"/><text x="352.30" y="566.90" text-anchor="middle" font-size="12" fill="#80708F">12:00 PM</text><path d="M451.90 545.40 V549.90" stroke="#80708F" stroke-width="1" fill="none"/><text x="451.90" y="566.90" text-anchor="middle" font-size="12" fill="#80708F">4:00 PM</text><path d="M551.50 545.40 V549.90" stroke="#80708F" stroke-width="1" fill="none"/><text x="551.50" y="566.90" text-anchor="middle" font-size="12" fill="#80708F">8:00 PM</text><path d="M651.10 545.40 V549.90" stroke="#80708F" stroke-width="1" fill="none"/><text x="651.10" y="566.90" text-anchor="middle" font-size="12" fill="#80708F">12:00 AM</text><path d="M750.70 545.40 V549.90" stroke="#80708F" stroke-width="1" fill="none"/><text x="750.70" y="566.90" text-anchor="middle" font-size="12" fill="#80708F">4:00 AM</text><path d="M850.30 545.40 V549.90" stroke="#80708F" stroke-width="1" fill="none"/><text x="850.30" y="566.90" text-anchor="middle" font-size="12" fill="#80708F">8:00 AM</text><text x="1013.20" y="821.10" text-anchor="end" font-size="12" fill="#80708F">0</text><path d="M1021.40 794.58 H1628.70" stroke="#F5F3F7" stroke-width="1" fill="none"/><text x="1013.20" y="798.78" text-anchor="end" font-size="12" fill="#80708F">200</text><path d="M1021.40 772.26 H1628.70" stroke="#F5F3F7" stroke-width="1" fill="none"/><text x="1013.20" y="776.46" text-anchor="end" font-size="12" fill="#80708F">400</text><path d="M1021.40 749.94 H1628.70" stroke="#F5F3F7" stroke-width="1" fill="none"/><text x="1013.20" y="754.14" text-anchor="end" font-size="12" fill="#80708F">600</text><path d="M1021.40 727.62 H1628.70" stroke="#F5F3F7" stroke-width="1" fill="none"/><text x="1013.20" y="731.82" text-anchor="end" font-size="12" fill="#80708F">800</text><path d="M1021.40 705.30 H1628.70" stroke="#F5F3F7" stroke-width="1" fill="none"/><text x="1013.20" y="709.50" text-anchor="end" font-size="12" fill="#80708F">1,000</text><path d="M1021.40 682.98 H1628.70" stroke="#F5F3F7" stroke-width="1" fill="none"/><text x="1013.20" y="687.18" text-anchor="end" font-size="12" fill="#80708F">1,200</text><path d="M1021.40 816.01 L1021.40 815.31 L1023.42 815.44 L1025.45 812.17 L1026.50 812.12 L1027.47 814.08 L1029.50 812.72 L1031.52 813.91 L1032.88 813.71 L1033.55 815.32 L1035.57 813.01 L1037.59 814.39 L1039.26 812.12 L1039.62 812.47 L1041.64 814.44 L1043.67 814.86 L1045.64 813.71 L1045.69 813.99 L1047.72 811.57 L1049.74 813.58 L1051.76 812.38 L1052.02 811.16 L1053.79 810.47 L1055.81 808.98 L1057.84 810.27 L1058.40 810.52 L1059.86 811.52 L1061.89 810.00 L1063.91 814.55 L1064.78 813.07 L1065.94 811.46 L1067.96 813.44 L1069.98 813.72 L1071.16 812.12 L1072.01 813.65 L1074.03 812.89 L1076.06 810.85 L1077.54 812.12 L1078.08 813.32 L1080.11 811.40 L1082.13 810.87 L1083.92 811.16 L1084.15 811.51 L1086.18 809.37 L1088.20 809.89 L1089.34 807.34 L1090.23 810.33 L1092.25 812.55 L1093.48 813.07 L1094.28 812.27 L1096.30 813.08 L1098.32 813.34 L1100.35 812.04 L1102.37 812.37 L1103.05 812.12 L1104.40 813.02 L1106.42 811.19 L1108.45 811.72 L1110.47 813.70 L1112.49 812.53 L1114.52 812.88 L1115.81 813.07 L1116.54 811.64 L1118.57 812.43 L1120.59 814.40 L1122.62 811.83 L1124.64 815.49 L1126.67 814.49 L1128.57 814.35 L1128.69 813.32 L1130.71 815.75 L1132.74 814.39 L1134.76 816.20 L1136.79 813.67 L1138.81 813.29 L1140.84 814.06 L1141.33 814.35 L1142.86 812.96 L1144.88 815.36 L1146.91 813.98 L1148.93 814.54 L1150.96 814.75 L1152.98 815.40 L1154.09 815.31 L1155.01 813.78 L1157.03 813.00 L1159.05 814.54 L1161.08 813.42 L1163.10 815.49 L1165.13 812.57 L1166.85 813.07 L1167.15 812.50 L1169.18 811.21 L1171.20 812.00 L1173.22 814.26 L1175.25 813.95 L1177.27 812.92 L1179.30 815.61 L1179.60 813.71 L1181.32 813.87 L1183.35 815.05 L1185.37 815.25 L1187.40 815.48 L1187.58 813.71 L1189.42 794.23 L1190.13 788.21 L1191.44 803.77 L1192.36 812.12 L1193.47 813.39 L1195.49 813.29 L1197.52 811.83 L1199.54 815.48 L1201.57 814.47 L1201.93 814.35 L1203.59 814.15 L1205.61 812.81 L1207.64 813.07 L1209.66 812.89 L1211.69 815.24 L1213.71 814.69 L1214.69 814.35 L1215.74 814.73 L1217.76 812.27 L1219.78 811.62 L1221.81 814.51 L1223.83 814.05 L1225.86 813.47 L1227.45 812.12 L1227.88 813.29 L1229.91 812.75 L1231.93 812.81 L1233.95 814.59 L1235.98 816.10 L1237.02 814.35 L1238.00 814.63 L1240.03 814.72 L1242.05 813.83 L1244.08 812.18 L1246.10 813.13 L1248.13 813.73 L1249.78 813.71 L1250.15 813.26 L1252.17 813.12 L1254.20 815.72 L1256.22 812.43 L1258.25 813.01 L1260.27 812.73 L1262.30 813.14 L1262.53 814.35 L1264.32 814.69 L1266.34 814.56 L1268.37 815.65 L1270.39 813.42 L1272.42 815.61 L1274.44 815.49 L1275.29 813.71 L1276.47 814.94 L1278.49 815.23 L1280.51 814.62 L1282.54 815.87 L1284.56 816.18 L1286.59 815.68 L1288.05 814.35 L1288.61 815.54 L1290.64 813.01 L1292.66 812.89 L1294.68 808.01 L1296.71 807.58 L1298.73 807.97 L1299.85 805.74 L1300.76 808.48 L1302.78 811.99 L1304.00 813.71 L1304.81 814.22 L1306.83 815.09 L1308.86 812.07 L1310.88 811.39 L1312.90 813.40 L1314.93 813.23 L1316.76 813.07 L1316.95 814.73 L1318.98 814.54 L1321.00 813.45 L1323.03 813.64 L1325.05 811.26 L1327.07 813.82 L1329.10 814.25 L1331.12 810.40 L1332.71 812.12 L1333.15 812.03 L1335.17 813.69 L1337.20 812.21 L1339.22 814.41 L1341.24 812.52 L1343.27 810.83 L1345.29 811.41 L1347.32 812.21 L1348.65 813.07 L1349.34 814.03 L1351.37 813.61 L1353.39 814.41 L1355.41 811.98 L1357.44 812.94 L1359.46 811.95 L1361.49 813.76 L1363.51 814.19 L1364.60 813.07 L1365.54 811.57 L1367.56 810.34 L1369.59 810.33 L1371.61 809.98 L1373.63 809.39 L1374.17 810.52 L1375.66 809.19 L1377.68 810.74 L1379.71 809.07 L1380.55 808.93 L1381.73 808.56 L1383.76 808.26 L1385.78 806.64 L1387.80 804.01 L1388.52 802.55 L1389.83 804.30 L1391.85 803.78 L1393.88 803.93 L1395.90 807.19 L1396.50 807.34 L1397.93 805.72 L1399.95 805.72 L1401.97 806.06 L1404.00 808.63 L1406.02 809.41 L1408.05 809.59 L1410.07 809.91 L1412.10 810.08 L1412.45 808.93 L1414.12 808.60 L1416.14 807.69 L1418.17 808.13 L1420.19 809.79 L1422.22 809.29 L1424.24 808.91 L1426.27 811.98 L1428.29 809.87 L1428.39 810.52 L1430.32 808.95 L1432.34 809.55 L1434.36 809.76 L1436.39 810.93 L1438.41 812.22 L1440.44 809.84 L1442.46 811.76 L1444.34 811.16 L1444.49 809.96 L1446.51 809.40 L1448.53 811.83 L1450.56 811.93 L1452.58 809.86 L1454.61 810.87 L1456.63 813.22 L1458.66 813.52 L1460.29 812.12 L1460.68 813.52 L1462.70 810.49 L1464.73 810.89 L1466.75 813.54 L1468.78 810.81 L1470.80 810.19 L1472.83 811.49 L1474.85 812.72 L1476.24 812.12 L1476.88 811.86 L1478.90 813.33 L1480.92 813.60 L1482.95 809.56 L1484.97 810.64 L1487.00 810.94 L1489.02 809.10 L1491.05 810.90 L1492.19 810.52 L1493.07 808.94 L1495.09 808.92 L1497.12 811.19 L1499.14 810.83 L1501.17 810.46 L1503.19 810.47 L1505.22 808.87 L1507.24 809.99 L1508.13 808.93 L1509.26 809.26 L1511.29 810.41 L1513.31 807.28 L1515.34 809.52 L1517.36 809.10 L1519.39 808.59 L1521.41 807.31 L1523.43 809.25 L1524.08 808.93 L1525.46 807.11 L1527.48 808.58 L1529.51 808.26 L1531.53 808.09 L1533.56 809.92 L1535.58 808.02 L1537.61 808.85 L1539.63 809.37 L1540.03 807.34 L1541.65 806.46 L1543.68 809.38 L1545.70 808.58 L1547.73 807.97 L1549.75 809.05 L1551.78 810.38 L1553.80 810.01 L1555.82 810.27 L1555.98 810.52 L1557.85 809.31 L1559.87 811.95 L1561.90 810.04 L1563.92 811.22 L1565.95 811.02 L1567.97 808.95 L1569.99 809.93 L1571.93 809.89 L1572.02 809.64 L1574.04 808.84 L1576.07 808.23 L1578.09 810.11 L1580.12 809.43 L1582.14 809.86 L1584.16 809.84 L1586.19 809.11 L1587.87 809.89 L1588.21 810.09 L1590.24 809.85 L1592.26 810.15 L1594.29 808.37 L1596.31 809.42 L1598.34 808.79 L1600.36 808.61 L1602.38 811.43 L1603.82 810.52 L1604.41 810.19 L1606.43 808.31 L1608.46 808.39 L1610.48 810.87 L1612.51 810.60 L1613.39 808.93 L1614.53 809.16 L1616.55 810.65 L1618.58 809.97 L1620.60 810.64 L1622.63 808.25 L1622.96 808.93 L1624.65 808.73 L1626.68 809.40 L1628.70 813.51 L1628.70 812.12" stroke="#F2B712" stroke-width="2" fill="none" stroke-linejoin="round"/><path d="M1021.40 816.26 L1021.40 815.78 L1023.42 806.39 L1025.45 794.82 L1025.87 795.22 L1027.47 802.32 L1029.06 808.93 L1029.50 808.00 L1031.52 803.51 L1032.24 802.55 L1033.55 804.70 L1035.57 803.46 L1037.59 803.40 L1037.67 804.15 L1039.62 802.12 L1041.64 805.62 L1042.45 803.19 L1043.67 805.26 L1045.64 805.74 L1045.69 808.08 L1047.72 806.32 L1049.74 809.22 L1051.38 812.12 L1051.76 814.20 L1053.79 806.42 L1055.21 807.34 L1055.81 798.71 L1057.44 785.02 L1057.84 768.91 L1059.68 698.94 L1059.86 706.71 L1061.59 785.02 L1061.89 791.39 L1063.18 808.93 L1063.91 811.39 L1065.94 807.85 L1067.96 809.80 L1067.97 807.34 L1069.98 811.08 L1072.01 812.81 L1072.75 812.12 L1074.03 813.46 L1076.06 809.02 L1077.54 807.34 L1078.08 807.53 L1080.11 804.78 L1082.13 806.08 L1083.92 805.74 L1084.15 804.72 L1086.18 803.48 L1087.11 802.55 L1088.20 790.68 L1089.02 783.42 L1090.23 796.74 L1090.93 804.15 L1092.25 806.48 L1094.28 804.16 L1096.30 805.85 L1096.67 808.93 L1098.32 807.44 L1100.35 808.69 L1102.37 811.38 L1103.05 810.52 L1104.40 812.03 L1106.42 811.70 L1108.45 812.92 L1109.43 810.52 L1110.47 808.52 L1112.49 809.55 L1114.52 806.05 L1115.81 807.34 L1116.54 808.52 L1118.57 806.85 L1120.59 808.98 L1122.19 812.12 L1122.62 814.27 L1124.64 810.06 L1126.67 803.12 L1128.57 802.55 L1128.69 802.88 L1130.71 802.73 L1132.74 808.68 L1133.35 808.93 L1134.76 808.99 L1136.79 802.55 L1138.81 798.38 L1139.73 798.41 L1140.84 802.85 L1142.86 809.67 L1144.52 812.12 L1144.88 812.96 L1146.91 808.93 L1148.93 809.58 L1150.90 810.52 L1150.96 812.66 L1152.98 811.94 L1155.01 812.75 L1157.03 812.98 L1157.28 810.52 L1159.05 807.09 L1161.08 808.52 L1162.06 805.74 L1163.10 806.04 L1165.13 807.87 L1167.15 810.52 L1169.18 808.71 L1170.04 810.52 L1171.20 812.78 L1173.22 810.25 L1175.25 813.53 L1177.27 812.17 L1179.30 813.67 L1179.60 812.12 L1181.32 812.97 L1183.35 808.56 L1185.37 808.98 L1185.98 810.52 L1187.40 810.91 L1189.42 806.66 L1191.44 809.41 L1192.36 807.34 L1193.47 808.75 L1195.49 807.71 L1197.52 810.41 L1198.74 812.12 L1199.54 814.15 L1201.57 808.68 L1203.59 812.51 L1205.12 810.52 L1205.61 811.38 L1207.64 806.49 L1209.66 806.94 L1209.91 805.74 L1211.69 805.33 L1213.71 804.82 L1214.69 801.60 L1215.74 806.18 L1217.76 807.89 L1219.47 812.12 L1219.78 813.49 L1221.81 811.09 L1223.83 811.96 L1225.86 811.10 L1227.45 810.52 L1227.88 807.96 L1229.91 810.61 L1231.93 810.11 L1233.83 810.52 L1233.95 808.18 L1235.98 807.18 L1238.00 802.54 L1238.93 798.41 L1240.03 799.50 L1242.05 806.22 L1243.40 812.12 L1244.08 813.58 L1246.10 814.12 L1248.13 811.25 L1250.15 810.34 L1252.17 814.69 L1252.97 813.07 L1254.20 808.59 L1256.15 807.97 L1256.22 805.90 L1258.25 809.28 L1260.27 812.11 L1262.30 815.71 L1262.53 813.71 L1264.32 813.14 L1266.34 804.41 L1267.96 804.15 L1268.37 806.50 L1270.39 808.25 L1272.10 813.07 L1272.42 814.41 L1274.44 811.09 L1276.47 812.21 L1278.49 813.75 L1280.51 814.25 L1282.54 811.06 L1284.56 814.55 L1284.86 812.12 L1286.59 813.35 L1288.61 811.16 L1290.64 809.19 L1292.66 810.18 L1294.43 810.52 L1294.68 811.15 L1296.71 802.83 L1298.73 802.05 L1299.85 797.77 L1300.76 805.56 L1302.40 812.12 L1302.78 813.41 L1304.81 812.42 L1306.83 814.57 L1308.86 813.92 L1310.38 812.12 L1310.88 812.42 L1312.90 809.56 L1314.93 810.30 L1316.95 807.29 L1318.98 802.61 L1318.99 804.79 L1321.00 806.13 L1323.03 811.98 L1323.14 813.07 L1325.05 811.82 L1327.07 812.21 L1329.10 814.48 L1331.12 814.87 L1332.71 812.12 L1333.15 814.42 L1335.17 807.69 L1337.20 807.09 L1339.22 803.87 L1340.04 805.74 L1341.24 809.47 L1343.27 807.83 L1345.29 810.47 L1345.46 810.52 L1347.32 809.70 L1349.34 812.50 L1351.37 809.21 L1351.84 812.12 L1353.39 813.71 L1355.41 810.08 L1357.44 808.00 L1359.46 806.08 L1361.41 807.34 L1361.49 805.87 L1363.51 802.28 L1365.54 798.00 L1366.20 798.41 L1367.56 801.28 L1369.39 810.52 L1369.59 811.35 L1371.61 809.49 L1373.63 808.29 L1374.17 810.52 L1375.66 807.96 L1377.68 809.82 L1379.71 807.06 L1381.73 805.98 L1383.74 807.34 L1383.76 806.89 L1385.78 801.88 L1387.80 798.51 L1388.52 796.18 L1389.83 799.63 L1391.85 805.56 L1393.31 810.52 L1393.88 812.44 L1395.90 807.80 L1397.93 804.31 L1399.69 805.74 L1399.95 803.71 L1401.97 805.23 L1404.00 807.80 L1406.02 806.54 L1408.05 808.08 L1409.26 808.93 L1410.07 806.70 L1412.10 798.14 L1414.04 793.95 L1414.12 796.55 L1416.14 799.84 L1418.17 810.88 L1418.82 810.52 L1420.19 809.50 L1422.22 809.50 L1424.24 810.22 L1426.27 806.94 L1428.29 807.39 L1428.39 807.34 L1430.32 807.02 L1432.34 805.65 L1434.36 809.69 L1436.39 811.39 L1437.96 808.93 L1438.41 808.00 L1440.44 796.73 L1442.46 790.22 L1443.38 784.38 L1444.49 793.17 L1446.51 801.83 L1447.53 810.52 L1448.53 809.88 L1450.56 811.60 L1452.58 809.60 L1453.91 812.12 L1454.61 812.73 L1456.63 809.83 L1458.66 811.43 L1460.29 808.93 L1460.68 808.66 L1462.70 803.20 L1464.73 799.22 L1466.03 799.37 L1466.75 795.85 L1468.78 794.70 L1470.80 789.68 L1470.81 790.12 L1472.83 801.87 L1474.64 810.52 L1474.85 812.47 L1476.88 809.65 L1478.90 806.94 L1480.92 806.07 L1482.62 807.34 L1482.95 806.05 L1484.97 804.04 L1487.00 807.12 L1489.02 807.05 L1491.05 804.80 L1492.19 804.15 L1493.07 805.84 L1495.09 807.20 L1497.12 807.09 L1499.14 806.92 L1501.17 808.67 L1501.75 808.93 L1503.19 807.37 L1505.22 800.81 L1506.54 800.32 L1507.24 795.85 L1509.26 793.67 L1510.68 789.80 L1511.29 786.60 L1513.31 768.17 L1514.83 751.54 L1515.34 759.30 L1517.36 803.28 L1517.70 807.34 L1519.39 806.17 L1521.41 806.94 L1523.43 808.40 L1524.08 807.34 L1525.46 805.48 L1527.48 809.45 L1529.51 808.46 L1531.53 806.35 L1533.56 808.41 L1533.65 805.74 L1535.58 803.10 L1537.48 804.15 L1537.61 801.11 L1539.63 730.15 L1540.35 702.77 L1541.65 752.85 L1543.22 807.34 L1543.68 806.61 L1545.70 807.63 L1547.73 806.61 L1549.60 807.34 L1549.75 806.51 L1551.78 806.16 L1553.80 805.83 L1555.82 807.86 L1555.98 808.93 L1557.85 808.74 L1559.87 805.17 L1560.76 804.15 L1561.90 802.76 L1563.92 798.03 L1565.55 790.76 L1565.95 791.77 L1567.97 794.73 L1569.99 802.03 L1570.33 800.96 L1572.02 805.60 L1574.04 809.24 L1575.11 810.52 L1576.07 808.66 L1578.09 808.03 L1580.12 805.89 L1582.14 803.48 L1583.09 804.15 L1584.16 806.18 L1586.19 806.65 L1587.87 810.52 L1588.21 807.56 L1590.24 807.99 L1592.26 799.14 L1594.29 796.17 L1594.89 796.18 L1596.31 803.16 L1598.34 808.36 L1599.04 810.52 L1600.36 809.29 L1602.38 806.90 L1604.41 809.06 L1606.43 807.18 L1607.01 807.34 L1608.46 804.86 L1610.48 804.81 L1612.51 803.48 L1613.39 805.74 L1614.53 806.23 L1616.55 805.69 L1618.58 808.68 L1619.77 807.34 L1620.60 801.10 L1622.63 788.42 L1624.55 778.64 L1624.65 777.93 L1626.68 779.06 L1628.70 783.43 L1628.70 781.83" stroke="#444674" stroke-width="2" fill="none" stroke-linejoin="round"/><path d="M1021.40 816.90 H1628.70" stroke="#80708F" stroke-width="1" fill="none"/><path d="M1051.50 816.90 V821.40" stroke="#80708F" stroke-width="1" fill="none"/><text x="1051.50" y="838.40" text-anchor="middle" font-size="12" fill="#80708F">12:00 PM</text><path d="M1152.66 816.90 V821.40" stroke="#80708F" stroke-width="1" fill="none"/><text x="1152.66" y="838.40" text-anchor="middle" font-size="12" fill="#80708F">4:00 PM</text><path d="M1253.82 816.90 V821.40" stroke="#80708F" stroke-width="1" fill="none"/><text x="1253.82" y="838.40" text-anchor="middle" font-size="12" fill="#80708F">8:00 PM</text><path d="M1354.98 816.90 V821.40" stroke="#80708F" stroke-width="1" fill="none"/><text x="1354.98" y="838.40" text-anchor="middle" font-size="12" fill="#80708F">12:00 AM</text><path d="M1456.14 816.90 V821.40" stroke="#80708F" stroke-width="1" fill="none"/><text x="1456.14" y="838.40" text-anchor="middle" font-size="12" fill="#80708F">4:00 AM</text><path d="M1557.30 816.90 V821.40" stroke="#80708F" stroke-width="1" fill="none"/><text x="1557.30" y="838.40" text-anchor="middle" font-size="12" fill="#80708F">8:00 AM</text></svg><svg style="position:absolute;left:0;top:0;overflow:visible" width="1680" height="1247" viewBox="0 0 1680 1247"><polygon points="271.1,676.4 281.2,674.4 292.0,675.7 310.4,677.5 310.4,698.0 305.4,697.3 300.0,696.6 297.3,697.3 294.0,696.6 290.6,699.3 287.9,702.0 285.2,704.0 279.8,706.0 271.1,709.4" fill="#6E5FC6"/><polygon points="310.4,698.0 318.9,700.0 324.3,703.3 331.0,707.4 330.4,710.1 324.3,705.4 317.6,701.7 310.4,699.6" fill="#6E5FC6"/><polygon points="310.4,677.5 321.6,677.7 335.1,676.4 345.9,679.1 359.3,680.4 372.8,680.4 386.3,681.8 398.4,680.4 406.5,677.7 413.2,680.4 417.3,684.5 411.9,688.5 399.8,693.9 397.7,699.3 403.8,703.3 414.6,707.4 421.3,710.1 421.3,715.5 425.4,718.2 428.1,712.8 430.8,704.7 428.1,699.3 433.5,693.9 438.9,696.6 444.2,699.3 453.7,704.7 459.1,708.7 469.9,713.5 471.2,718.2 463.1,720.9 456.4,724.9 453.7,728.9 445.6,727.6 438.9,728.9 430.8,734.3 420.0,739.1 420.0,733.0 413.2,727.6 399.8,723.6 397.1,722.9 345.9,723.3 344.5,726.3 337.8,720.9 335.1,719.5 329.7,711.4 324.3,706.0 310.4,698.6" fill="#B0A8E2"/><polygon points="345.2,723.3 397.1,722.9 399.8,723.6 413.2,727.6 420.0,733.0 420.0,739.1 430.8,734.3 438.9,728.9 445.6,727.6 449.6,731.6 444.2,737.0 437.5,742.4 433.5,747.8 432.1,754.6 422.7,762.6 422.0,766.7 424.7,774.8 422.7,774.8 418.6,768.0 413.2,765.3 405.2,766.0 398.4,768.0 391.7,773.4 386.3,768.0 380.9,764.0 374.2,761.3 364.7,760.6 356.6,759.3 348.6,751.9 343.2,745.1 341.8,734.3" fill="#6E5FC6"/><polygon points="356.6,759.3 364.7,760.6 374.2,761.3 380.9,764.0 386.3,768.0 391.7,773.4 394.4,785.6 398.4,790.9 405.2,789.6 411.9,784.9 406.5,790.9 402.5,795.0 395.7,796.3 386.3,790.9 379.6,784.2 372.8,774.8 364.7,765.3" fill="#B0A8E2"/><polygon points="358.0,759.9 363.4,768.0 368.8,780.2 364.7,776.1 359.3,765.3" fill="#B0A8E2"/><polygon points="402.5,795.0 410.6,796.3 418.6,799.0 424.0,809.8 430.8,813.9 428.1,815.2 421.3,812.5 413.2,807.1 407.9,801.7" fill="#B0A8E2"/><polygon points="464.5,719.5 472.5,720.6 475.9,727.6 467.2,726.3" fill="#B0A8E2"/><polygon points="417.3,781.5 426.7,782.9 434.8,786.9 429.4,786.9 421.3,784.2" fill="#DCD6E1"/><polygon points="438.9,788.2 448.3,789.6 440.2,790.9" fill="#DCD6E1"/><polygon points="282.3,787.2 284.1,788.0 283.2,789.1" fill="#6E5FC6"/><polygon points="439.2,658.6 458.8,649.8 487.8,649.3 501.2,647.2 534.3,648.3 551.8,651.4 538.4,654.5 538.4,663.8 536.3,671.0 533.2,676.2 523.9,680.3 509.5,684.4 501.2,688.6 495.0,695.8 491.9,698.4 484.7,695.8 477.4,685.5 474.3,681.3 473.3,675.1 471.2,670.0 466.1,664.8 453.7,661.7 443.3,660.7" fill="#DCD6E1"/><polygon points="531.2,686.0 539.4,685.5 548.7,687.0 545.6,689.6 536.3,690.6 532.2,688.6" fill="#A89DDC"/><polygon points="404.1,650.3 427.8,648.3 458.8,648.8 451.6,653.4 442.3,657.6 433.0,660.7 424.7,662.2 412.3,661.7 407.2,659.6 397.9,655.0 405.1,652.4" fill="#B0A8E2"/><polygon points="394.8,653.4 404.1,652.4 412.3,655.5 410.3,658.1 402.0,657.6 395.8,655.5" fill="#B0A8E2"/><polygon points="346.2,662.2 356.5,660.7 351.4,663.2" fill="#B0A8E2"/><polygon points="355.5,664.3 368.9,662.7 376.2,664.8 363.8,666.3" fill="#B0A8E2"/><polygon points="382.9,663.2 391.7,662.2 390.6,665.3 384.4,664.8" fill="#B0A8E2"/><polygon points="393.7,662.2 402.0,662.7 410.3,664.8 424.7,664.8 422.7,666.3 404.1,666.3 398.9,664.8" fill="#B0A8E2"/><polygon points="340.0,667.9 356.5,667.9 352.4,671.0 340.0,673.1" fill="#B0A8E2"/><polygon points="352.4,671.0 363.8,670.0 374.1,671.0 383.4,677.2 371.0,678.7 355.5,677.2 353.4,674.1" fill="#B0A8E2"/><polygon points="385.5,669.4 395.8,668.4 403.0,670.0 397.9,673.1 387.5,672.5" fill="#B0A8E2"/><polygon points="394.8,674.1 402.0,673.1 408.2,676.2 406.1,681.3 397.9,681.3 393.7,678.2" fill="#B0A8E2"/><polygon points="407.2,670.0 419.6,669.4 433.0,672.0 446.4,677.2 457.8,684.4 453.7,688.6 449.5,693.7 443.3,691.7 430.9,685.5 418.5,684.4 412.3,677.2" fill="#B0A8E2"/><polygon points="414.4,687.5 422.7,688.6 423.7,691.7 416.5,691.7" fill="#B0A8E2"/><polygon points="429.5,812.6 434.4,807.3 441.1,804.4 444.1,806.8 453.7,808.7 460.5,807.7 462.5,813.6 467.3,818.4 473.1,818.9 477.9,821.3 480.9,828.1 486.7,833.4 492.5,837.3 500.2,838.7 508.0,843.6 509.4,848.4 506.0,856.2 502.2,862.0 500.2,874.6 496.3,881.3 488.6,884.3 483.8,889.1 482.8,895.9 477.0,902.7 473.1,906.5 468.3,909.4 465.4,906.5 468.3,912.3 464.4,917.2 457.6,919.1 455.7,923.0 451.8,925.9 450.8,937.5 446.0,941.4 447.0,945.3 451.8,951.1 448.9,954.0 440.2,952.0 434.4,946.2 433.9,935.6 436.3,925.9 438.2,911.4 440.2,896.8 443.1,877.5 444.1,871.7 439.2,868.8 432.4,862.9 428.6,853.3 423.2,842.6 424.7,831.0 427.6,828.1 430.5,824.2" fill="#B0A8E2"/><polygon points="585.5,694.1 598.1,687.3 607.8,679.5 623.3,674.7 632.0,675.5 636.9,678.6 646.5,680.5 651.4,683.4 656.2,682.4 665.9,681.0 675.6,679.5 688.2,679.0 702.7,677.6 702.7,775.4 691.1,775.4 685.3,772.5 681.4,772.5 679.5,776.4 682.4,782.2 687.2,781.7 684.3,787.0 675.6,790.9 665.9,792.8 657.2,793.8 662.0,804.5 670.8,804.5 669.8,811.2 664.9,820.0 660.1,827.7 600.0,827.7 594.2,822.4 580.7,820.0 569.1,821.9 559.4,820.0 551.6,810.3 543.9,800.6 543.9,783.2 545.8,777.3 549.7,771.5 555.5,767.7 559.4,758.0 565.2,753.1 572.0,751.2 559.4,750.2 558.4,736.7 572.0,736.7 569.1,725.0 565.2,720.2 572.0,719.2 576.8,715.4 584.6,717.3 588.4,713.4 592.3,705.7 596.2,708.6 600.0,705.7 597.1,701.8 596.2,694.1 592.3,699.9 588.4,701.8 585.5,697.0" fill="#B0A8E2"/><polygon points="566.2,702.8 569.1,703.7 571.0,706.6 577.8,715.4 575.8,717.8 566.2,720.2 569.1,713.4 565.2,707.6" fill="#B0A8E2"/><polygon points="558.4,711.5 563.2,710.5 563.7,714.4 558.4,716.3" fill="#B0A8E2"/><polygon points="565.2,752.7 572.9,748.3 575.8,742.5 580.7,739.6 586.5,734.7 592.3,732.8 598.1,731.8 602.0,731.8 607.8,738.6 613.6,738.6 619.4,745.4 627.2,750.2 642.7,750.2 642.7,758.0 640.7,762.8 633.0,762.8 622.3,761.9 611.7,764.3 605.9,760.9 600.0,758.9 594.2,759.9 592.3,752.2 586.5,751.2 578.7,752.2 572.0,752.7" fill="#FFFFFF"/><polygon points="589.4,731.8 598.1,730.9 602.0,732.8 607.8,740.5 606.8,745.4 603.9,748.3 602.0,742.5 596.2,736.7 592.3,734.7" fill="#B0A8E2"/><polygon points="613.6,737.6 617.5,741.5 620.4,750.2 617.5,750.7 614.6,744.4 611.7,739.6" fill="#B0A8E2"/><polygon points="599.1,747.8 604.4,747.8 602.0,750.7" fill="#B0A8E2"/><polygon points="591.8,738.1 594.0,738.1 593.5,745.4 591.3,744.9" fill="#B0A8E2"/><polygon points="600.0,731.8 603.9,732.8 611.7,740.5 609.7,742.0 603.0,735.2" fill="#FFFFFF"/><polygon points="628.1,732.8 633.0,728.9 641.7,731.8 650.4,732.8 653.3,738.6 636.9,740.5 627.2,741.5" fill="#FFFFFF"/><polygon points="664.0,728.9 674.6,728.0 673.7,732.8 669.8,734.7 674.6,743.5 675.6,749.3 669.8,750.2 665.9,740.5 664.0,734.7" fill="#FFFFFF"/><polygon points="607.8,707.6 615.5,701.8 614.6,697.0 610.7,694.1 616.5,687.3 623.3,687.3 621.4,690.2 617.5,694.1 620.4,698.9 629.1,698.9 625.2,701.8 621.4,704.7 615.5,709.6 603.0,712.5 598.1,709.6 602.0,707.6" fill="#FFFFFF"/><polygon points="637.8,684.4 642.7,683.9 645.6,687.3 642.7,690.2 640.7,687.3" fill="#FFFFFF"/><polygon points="636.9,765.7 640.7,765.7 649.4,781.2 656.2,793.8 656.2,802.5 652.3,798.7 645.6,786.1 637.8,770.6" fill="#FFFFFF"/><polygon points="665.9,763.8 670.8,767.7 680.4,772.5 679.5,776.4 671.7,776.4 667.8,769.6" fill="#FFFFFF"/><polygon points="656.2,802.5 662.0,802.5 670.8,799.6 670.8,804.5 661.1,807.4" fill="#FFFFFF"/><polygon points="672.7,672.7 680.4,667.9 690.1,665.0 695.0,665.0 683.3,670.8 675.6,675.7" fill="#B0A8E2"/><polygon points="599.1,719.2 605.9,718.8 609.7,721.2 606.8,723.1 600.0,722.1" fill="#DCD6E1"/><polygon points="605.9,731.8 610.7,732.8 611.7,735.7 607.8,736.2" fill="#DCD6E1"/><polygon points="593.8,759.4 600.0,758.9 605.9,760.9 611.7,764.3 622.3,761.9 622.3,787.0 619.4,787.2 603.0,780.3 597.1,779.3 593.3,775.4 594.2,764.8" fill="#DCD6E1"/><polygon points="564.2,776.4 582.6,789.0 582.6,794.8 575.8,798.7 569.1,798.7 565.2,797.2" fill="#DCD6E1"/><polygon points="643.6,750.2 653.3,749.3 650.4,757.0 643.6,759.9" fill="#DCD6E1"/><polygon points="659.1,745.4 665.9,746.4 674.6,749.3 688.2,748.3 691.1,759.9 694.0,771.5 687.2,775.4 681.4,772.5 670.8,767.7 665.9,763.8 660.1,752.2" fill="#DCD6E1"/><polygon points="549.7,771.5 559.4,771.5 555.5,777.3 548.7,784.1" fill="#DCD6E1"/><polygon points="603.0,817.1 617.5,807.4 636.9,805.4 639.8,816.1 630.1,827.7 603.0,827.7" fill="#DCD6E1"/><polygon points="645.6,793.8 652.3,798.7 647.5,800.6" fill="#DCD6E1"/><polygon points="656.2,804.5 670.8,804.5 665.9,814.2 661.1,812.2" fill="#DCD6E1"/><polygon points="547.7,804.5 559.4,805.4 569.1,810.3 565.2,820.0 559.4,820.0 551.6,810.3" fill="#DCD6E1"/><polygon points="688.9,677.0 700.9,678.1 704.2,680.3 709.6,684.7 715.1,681.4 716.1,671.6 727.0,668.9 737.9,666.1 751.0,664.0 766.3,661.2 788.1,663.4 780.4,667.8 807.7,668.9 816.4,671.6 821.8,674.3 838.2,671.6 858.9,674.3 875.2,677.0 895.9,677.6 912.8,679.8 912.8,687.9 910.1,692.3 894.8,697.7 885.0,698.8 881.8,705.4 880.7,707.6 875.2,714.1 869.8,717.9 867.6,707.6 870.9,703.2 881.8,694.5 875.2,696.7 865.4,701.0 857.8,699.9 842.5,703.2 830.6,710.3 839.3,714.1 838.2,722.8 829.5,732.6 822.9,735.9 820.7,734.8 810.9,742.4 805.5,741.3 799.0,743.5 796.8,746.2 803.3,749.0 799.0,756.6 803.3,759.9 803.3,768.6 799.0,775.1 791.3,779.5 782.6,782.7 775.0,781.6 777.2,788.2 780.4,794.7 779.3,803.4 773.9,810.0 768.4,805.6 766.8,801.8 764.1,810.0 768.4,823.0 764.6,823.0 760.8,810.0 759.7,799.6 755.4,796.9 751.0,792.5 746.7,784.9 741.2,777.3 735.8,781.6 729.2,788.2 724.9,798.0 722.7,810.0 719.4,812.2 715.1,799.1 711.8,788.2 708.5,781.6 705.3,778.4 700.9,775.1 688.9,775.1" fill="#B0A8E2"/><polygon points="748.8,653.6 755.4,652.5 761.9,654.7 759.7,656.9 753.2,656.3" fill="#B0A8E2"/><polygon points="764.1,657.4 771.7,657.4 766.3,658.7" fill="#B0A8E2"/><polygon points="833.8,664.0 846.9,664.5 840.4,666.1" fill="#B0A8E2"/><polygon points="842.5,713.0 844.7,714.1 845.8,721.7 842.5,727.2 841.4,718.4" fill="#B0A8E2"/><polygon points="839.3,737.0 848.0,734.8 841.4,740.2 840.4,747.9 839.3,753.3 830.6,756.6 821.8,760.9 819.7,757.7 826.2,753.3 834.9,746.8 839.3,741.3" fill="#B0A8E2"/><polygon points="841.4,732.6 848.0,735.3 842.5,739.2 838.7,737.0" fill="#B0A8E2"/><polygon points="810.9,742.4 820.7,735.9 818.6,744.6 817.5,754.4 813.1,754.4 810.9,749.0" fill="#DCD6E1"/><polygon points="802.2,776.2 803.9,777.3 802.2,781.6" fill="#B0A8E2"/><polygon points="780.4,787.6 783.7,788.2 781.5,790.4" fill="#B0A8E2"/><polygon points="726.0,810.0 728.1,812.2 727.6,816.5 726.0,815.4" fill="#B0A8E2"/><polygon points="802.2,791.4 804.4,792.5 805.5,801.3 809.9,804.5 812.0,812.2 809.9,818.7 805.5,810.0 802.2,801.3" fill="#B0A8E2"/><polygon points="764.1,783.8 772.8,780.6 776.1,792.5 777.2,799.1 772.8,798.0 766.3,790.4" fill="#DCD6E1"/><polygon points="552.3,815.0 560.9,821.1 569.5,820.0 580.3,817.5 585.3,820.8 591.1,821.5 593.3,825.1 592.5,833.7 597.6,842.3 599.0,845.2 601.2,855.3 598.3,861.7 597.6,868.9 600.4,874.7 602.6,879.7 604.8,890.5 609.1,901.3 610.5,907.0 616.3,906.3 624.9,903.4 632.1,897.7 636.4,890.5 641.4,884.0 641.4,879.7 640.0,876.1 643.6,871.8 650.8,865.3 651.5,856.7 649.3,847.3 648.6,842.3 652.9,835.8 657.9,830.1 664.4,822.2 668.0,815.0" fill="#B0A8E2"/><polygon points="668.0,858.8 669.8,865.3 668.0,869.6 663.7,884.0 660.8,886.9 657.9,886.2 657.2,879.7 658.7,869.6 662.3,866.8" fill="#B0A8E2"/><polygon points="603.3,817.2 623.4,815.0 633.5,824.3 631.4,835.1 630.6,840.9 632.1,849.5 629.2,850.9 629.9,859.6 627.0,858.1 619.9,856.0 617.0,855.3 616.3,848.1 612.7,847.3 607.6,848.1 605.5,844.5 599.0,844.5 603.3,842.3 605.5,836.6 609.1,829.4 609.8,821.5" fill="#DCD6E1"/><polygon points="592.5,826.5 604.8,826.5 609.1,822.2 605.5,836.6 602.6,842.3 598.3,842.3 593.3,833.7" fill="#DCD6E1"/><polygon points="603.3,815.0 637.8,815.0 641.4,819.3 638.5,822.9 630.6,822.9 625.6,819.3 610.5,820.8 604.8,825.1" fill="#DCD6E1"/><polygon points="560.2,815.0 569.5,815.0 569.5,820.0 560.9,821.1" fill="#DCD6E1"/><polygon points="788.8,880.8 793.5,878.5 803.0,874.5 806.9,868.2 813.2,862.7 818.7,864.3 820.3,860.4 825.0,857.2 831.3,858.8 829.7,864.3 838.4,870.6 840.7,866.7 842.3,855.6 847.0,863.5 849.4,873.0 854.9,876.9 858.1,881.6 862.0,886.3 863.6,894.2 861.2,902.9 857.3,913.1 852.5,916.2 845.5,916.2 839.2,913.9 834.4,909.2 830.5,907.6 826.6,902.9 818.7,901.3 809.3,903.7 806.9,906.0 796.7,908.4 791.9,906.0 790.4,896.6 788.8,888.7" fill="#B0A8E2"/><polygon points="847.8,921.8 853.3,921.8 851.0,927.3" fill="#B0A8E2"/><polygon points="755.0,819.8 760.5,822.6 766.0,828.1 773.1,836.8 773.8,843.8 769.9,841.5 764.4,833.6 758.9,825.7" fill="#B0A8E2"/><polygon points="760.5,810.0 763.6,816.3 766.8,818.7 769.9,824.2 770.7,828.5 767.5,826.5 764.4,821.0 761.2,813.9" fill="#B0A8E2"/><polygon points="780.9,828.1 785.6,825.0 791.2,821.0 795.1,816.7 798.2,819.4 796.7,822.6 796.7,828.9 794.3,833.6 791.9,839.9 782.5,837.5 780.1,830.5" fill="#B0A8E2"/><polygon points="773.8,845.4 780.9,846.2 787.2,847.8 791.9,850.1 787.2,850.1 779.4,848.6 774.6,847.0" fill="#B0A8E2"/><polygon points="801.4,828.9 809.3,828.9 804.5,832.0 804.5,837.5 806.1,843.1 803.0,843.1 801.4,837.5 799.8,843.1 799.0,835.2" fill="#B0A8E2"/><polygon points="821.1,833.6 826.6,832.8 827.4,836.8 832.9,836.0 840.0,836.8 846.2,839.9 851.8,845.4 855.7,852.5 858.1,854.5 851.8,853.3 843.9,850.9 840.0,850.9 834.4,849.4 836.8,845.4 832.9,841.5 827.4,839.9 824.2,836.8" fill="#B0A8E2"/><polygon points="795.1,850.9 806.1,849.7 807.7,852.5 796.7,851.3" fill="#B0A8E2"/><polygon points="888.7,932.0 893.5,928.8 893.5,934.4" fill="#B0A8E2"/><polygon points="805.3,813.9 810.8,810.0 812.4,816.3 810.0,818.7" fill="#B0A8E2"/><polygon points="854.1,843.8 860.4,841.5 858.1,844.6" fill="#B0A8E2"/><polyline points="438.2,807.7 439.2,813.6 447.9,818.4 448.9,826.1 451.8,829.1 454.7,826.1 453.7,822.8 461.5,820.3 462.5,814.5" fill="none" stroke="#FFFFFF" stroke-width="0.6" stroke-linejoin="round"/><polyline points="461.5,820.3 463.4,827.1 467.3,828.1 469.2,826.1" fill="none" stroke="#FFFFFF" stroke-width="0.6" stroke-linejoin="round"/><polyline points="467.8,818.9 467.8,826.1" fill="none" stroke="#FFFFFF" stroke-width="0.6" stroke-linejoin="round"/><polyline points="473.6,818.9 473.6,826.1" fill="none" stroke="#FFFFFF" stroke-width="0.6" stroke-linejoin="round"/><polyline points="444.1,828.1 448.9,828.1 454.7,829.1 461.5,827.1 465.4,828.6 477.9,825.7" fill="none" stroke="#FFFFFF" stroke-width="0.6" stroke-linejoin="round"/><polyline points="427.6,828.6 434.4,832.0 438.2,835.8 443.1,836.8 444.1,840.7 439.2,842.6 437.3,847.5 439.2,852.3 443.1,856.2" fill="none" stroke="#FFFFFF" stroke-width="0.6" stroke-linejoin="round"/><polyline points="433.4,832.0 426.6,841.6" fill="none" stroke="#FFFFFF" stroke-width="0.6" stroke-linejoin="round"/><polyline points="444.1,828.1 444.1,840.7" fill="none" stroke="#FFFFFF" stroke-width="0.6" stroke-linejoin="round"/><polyline points="443.1,856.2 446.0,856.2 451.8,853.3 452.8,857.1 461.5,861.0 462.5,865.9 467.3,871.7 467.3,877.5 473.1,884.3 474.1,889.1 469.2,893.9" fill="none" stroke="#FFFFFF" stroke-width="0.6" stroke-linejoin="round"/><polyline points="446.0,856.2 445.0,869.7 447.9,881.3" fill="none" stroke="#FFFFFF" stroke-width="0.6" stroke-linejoin="round"/><polyline points="447.9,881.3 450.8,879.9 454.7,881.3 457.6,879.4 460.5,874.6 466.3,875.1" fill="none" stroke="#FFFFFF" stroke-width="0.6" stroke-linejoin="round"/><polyline points="457.6,880.4 467.3,888.1 466.3,891.5 472.1,891.5" fill="none" stroke="#FFFFFF" stroke-width="0.6" stroke-linejoin="round"/><polyline points="448.9,881.3 447.0,888.1 443.1,901.7 442.1,911.4 440.2,925.9 438.2,940.4 439.2,946.2" fill="none" stroke="#FFFFFF" stroke-width="0.6" stroke-linejoin="round"/><polyline points="467.3,898.8 475.0,903.6" fill="none" stroke="#FFFFFF" stroke-width="0.6" stroke-linejoin="round"/><polyline points="472.1,891.5 467.3,897.8" fill="none" stroke="#FFFFFF" stroke-width="0.6" stroke-linejoin="round"/><polyline points="598.1,687.8 598.1,696.0 602.0,705.7" fill="none" stroke="#FFFFFF" stroke-width="0.6" stroke-linejoin="round"/><polyline points="619.4,678.6 620.4,684.4 615.5,694.1 615.5,698.9" fill="none" stroke="#FFFFFF" stroke-width="0.6" stroke-linejoin="round"/><polyline points="629.1,675.7 633.0,692.1 627.2,697.9" fill="none" stroke="#FFFFFF" stroke-width="0.6" stroke-linejoin="round"/><polyline points="602.0,712.5 609.7,711.5 620.4,711.5 625.2,708.6 633.0,710.5 636.9,715.4" fill="none" stroke="#FFFFFF" stroke-width="0.6" stroke-linejoin="round"/><polyline points="580.7,718.8 588.4,723.1 590.4,727.0 598.1,725.0 607.8,723.1 618.5,722.1 621.4,717.3 632.0,716.3 636.9,715.4 650.4,722.1 648.5,727.0" fill="none" stroke="#FFFFFF" stroke-width="0.6" stroke-linejoin="round"/><polyline points="586.5,725.0 590.4,732.8" fill="none" stroke="#FFFFFF" stroke-width="0.6" stroke-linejoin="round"/><polyline points="609.7,723.1 613.6,725.0 617.5,727.0 615.5,734.7 625.2,734.7 629.1,732.8" fill="none" stroke="#FFFFFF" stroke-width="0.6" stroke-linejoin="round"/><polyline points="572.0,736.7 578.7,736.7" fill="none" stroke="#FFFFFF" stroke-width="0.6" stroke-linejoin="round"/><polyline points="572.0,758.9 567.1,771.5 559.4,771.5" fill="none" stroke="#FFFFFF" stroke-width="0.6" stroke-linejoin="round"/><polyline points="594.2,758.0 593.3,776.4 597.1,779.3" fill="none" stroke="#FFFFFF" stroke-width="0.6" stroke-linejoin="round"/><polyline points="622.3,761.9 622.3,782.2 643.6,782.2" fill="none" stroke="#FFFFFF" stroke-width="0.6" stroke-linejoin="round"/><polyline points="572.0,758.9 559.4,770.6" fill="none" stroke="#FFFFFF" stroke-width="0.6" stroke-linejoin="round"/><polyline points="559.4,770.6 582.6,789.0" fill="none" stroke="#FFFFFF" stroke-width="0.6" stroke-linejoin="round"/><polyline points="582.6,789.0 597.1,780.3 603.0,780.3 602.0,789.0 602.0,800.6 600.0,824.8" fill="none" stroke="#FFFFFF" stroke-width="0.6" stroke-linejoin="round"/><polyline points="619.4,787.2 619.4,810.3" fill="none" stroke="#FFFFFF" stroke-width="0.6" stroke-linejoin="round"/><polyline points="641.7,762.8 644.6,771.5 656.2,771.5" fill="none" stroke="#FFFFFF" stroke-width="0.6" stroke-linejoin="round"/><polyline points="660.1,752.2 665.9,763.8" fill="none" stroke="#FFFFFF" stroke-width="0.6" stroke-linejoin="round"/><polyline points="675.6,790.9 673.7,776.4" fill="none" stroke="#FFFFFF" stroke-width="0.6" stroke-linejoin="round"/><polyline points="656.2,793.8 672.7,789.9" fill="none" stroke="#FFFFFF" stroke-width="0.6" stroke-linejoin="round"/><polyline points="543.9,783.2 564.2,784.1 564.2,796.7 551.6,796.7" fill="none" stroke="#FFFFFF" stroke-width="0.6" stroke-linejoin="round"/><polyline points="569.1,798.7 572.9,808.3 578.7,806.4 580.7,820.0" fill="none" stroke="#FFFFFF" stroke-width="0.6" stroke-linejoin="round"/><polyline points="582.6,794.8 588.4,800.6 588.4,820.0" fill="none" stroke="#FFFFFF" stroke-width="0.6" stroke-linejoin="round"/><polyline points="690.0,714.1 705.3,709.7 719.4,711.9 726.0,718.4 739.0,722.8" fill="none" stroke="#FFFFFF" stroke-width="0.6" stroke-linejoin="round"/><polyline points="739.0,722.8 760.8,716.8 780.4,721.7 793.5,721.7 802.2,714.1 810.9,714.1 820.7,725.0 828.4,724.4" fill="none" stroke="#FFFFFF" stroke-width="0.6" stroke-linejoin="round"/><polyline points="740.1,722.8 755.4,735.9 771.7,739.2 784.8,735.9 799.0,727.2 793.5,724.4" fill="none" stroke="#FFFFFF" stroke-width="0.6" stroke-linejoin="round"/><polyline points="739.0,722.8 735.8,727.2 726.0,735.9 715.1,746.8" fill="none" stroke="#FFFFFF" stroke-width="0.6" stroke-linejoin="round"/><polyline points="715.1,747.9 721.6,759.9 727.0,766.4 741.2,772.9 757.6,769.7 760.8,780.6 775.0,781.6" fill="none" stroke="#FFFFFF" stroke-width="0.6" stroke-linejoin="round"/><polyline points="715.1,749.0 709.6,757.7 706.3,771.8 705.3,778.4" fill="none" stroke="#FFFFFF" stroke-width="0.6" stroke-linejoin="round"/><polyline points="690.0,734.8 700.9,738.1 708.5,735.9 724.9,735.9" fill="none" stroke="#FFFFFF" stroke-width="0.6" stroke-linejoin="round"/><polyline points="700.9,738.1 704.2,746.8 696.5,753.3 690.0,751.1" fill="none" stroke="#FFFFFF" stroke-width="0.6" stroke-linejoin="round"/><polyline points="708.5,749.0 696.5,766.4" fill="none" stroke="#FFFFFF" stroke-width="0.6" stroke-linejoin="round"/><polyline points="741.2,772.9 742.3,781.6 748.8,781.6" fill="none" stroke="#FFFFFF" stroke-width="0.6" stroke-linejoin="round"/><polyline points="757.6,769.7 759.7,781.6 764.1,783.8" fill="none" stroke="#FFFFFF" stroke-width="0.6" stroke-linejoin="round"/><polyline points="768.4,805.6 766.3,790.4 761.9,786.0" fill="none" stroke="#FFFFFF" stroke-width="0.6" stroke-linejoin="round"/><polyline points="597.6,868.9 618.4,870.3 622.7,869.6" fill="none" stroke="#FFFFFF" stroke-width="0.6" stroke-linejoin="round"/><polyline points="614.8,871.8 613.4,879.7 613.4,894.8" fill="none" stroke="#FFFFFF" stroke-width="0.6" stroke-linejoin="round"/><polyline points="613.4,886.9 614.8,890.5 623.4,887.6 630.6,880.4 634.2,880.4 636.4,889.0" fill="none" stroke="#FFFFFF" stroke-width="0.6" stroke-linejoin="round"/><polyline points="617.0,859.6 617.0,868.2 618.4,870.3" fill="none" stroke="#FFFFFF" stroke-width="0.6" stroke-linejoin="round"/><polyline points="632.1,864.6 637.8,862.4 642.1,865.3" fill="none" stroke="#FFFFFF" stroke-width="0.6" stroke-linejoin="round"/><polyline points="640.7,856.7 650.8,854.5" fill="none" stroke="#FFFFFF" stroke-width="0.6" stroke-linejoin="round"/><polyline points="639.3,832.3 648.6,840.9" fill="none" stroke="#FFFFFF" stroke-width="0.6" stroke-linejoin="round"/><polyline points="622.7,870.3 631.4,866.0 637.1,869.6 634.2,880.4 629.9,879.7" fill="none" stroke="#FFFFFF" stroke-width="0.6" stroke-linejoin="round"/><polyline points="639.3,822.9 639.3,833.0 632.1,833.7" fill="none" stroke="#FFFFFF" stroke-width="0.6" stroke-linejoin="round"/><polyline points="652.2,823.6 652.2,835.1" fill="none" stroke="#FFFFFF" stroke-width="0.6" stroke-linejoin="round"/><polyline points="637.8,849.5 636.4,862.4" fill="none" stroke="#FFFFFF" stroke-width="0.6" stroke-linejoin="round"/><polyline points="840.1,837.5 840.1,850.9" fill="none" stroke="#FFFFFF" stroke-width="0.6" stroke-linejoin="round"/></svg><div style="position:absolute;left:893.5px;top:810px;width:20px;height:140px;border-radius:3px;background:linear-gradient(180deg,#6C5FC7 0%,#6C5FC7 17%,#7065C4 45%,#7B70BE 75%,#8D84B6 100%)"></div><div class="t" style="left:903.50px;transform:translateX(-50%);top:787.84px;font-size:12px;color:#2B1D38;font-weight:400;">High</div><div class="t" style="left:903.50px;transform:translateX(-50%);top:959.84px;font-size:12px;color:#2B1D38;font-weight:400;">Low</div><div style="position:absolute;left:959px;top:927px;width:690px;height:46px;background:#FAF9FB;border-top:1px solid #E0DCE5;border-bottom:1px solid #E0DCE5;box-sizing:border-box"></div><div class="t" style="left:979.00px;top:944.30px;font-size:11.7px;color:#80708F;font-weight:700;letter-spacing:-0.15px">BROWSER.NAME</div><div class="t" style="right:51.00px;top:944.30px;font-size:11.7px;color:#80708F;font-weight:700;letter-spacing:-0.15px">COUNT()</div><div class="t" style="left:979.00px;top:985.30px;font-size:15px;color:#3E3446;font-weight:400;">Chrome</div><div class="t" style="right:51.00px;top:985.30px;font-size:15px;color:#3E3446;font-weight:400;">7.7m</div><div style="position:absolute;left:959px;top:1013px;width:690px;height:1px;background:#E0DCE5"></div><div class="t" style="left:979.00px;top:1026.30px;font-size:15px;color:#3E3446;font-weight:400;">Firefox</div><div class="t" style="right:51.00px;top:1026.30px;font-size:15px;color:#3E3446;font-weight:400;">1.1m</div><div style="position:absolute;left:959px;top:1054px;width:690px;height:1px;background:#E0DCE5"></div><div class="t" style="left:979.00px;top:1067.30px;font-size:15px;color:#3E3446;font-weight:400;">Safari</div><div class="t" style="right:51.00px;top:1067.30px;font-size:15px;color:#3E3446;font-weight:400;">524k</div><div style="position:absolute;left:959px;top:1095px;width:690px;height:1px;background:#E0DCE5"></div><div class="t" style="left:979.00px;top:1108.30px;font-size:15px;color:#3E3446;font-weight:400;">Go-http-client</div><div class="t" style="right:51.00px;top:1108.30px;font-size:15px;color:#3E3446;font-weight:400;">331k</div><div style="position:absolute;left:220px;top:1154px;width:1460px;height:93px;background:#FAF9FB;border-top:1px solid #E0DCE5;box-sizing:border-box"></div><div class="t" style="left:251.00px;top:1193.46px;font-size:16px;color:#80708F;font-weight:400;">Privacy Policy</div><div class="t" style="left:369.50px;top:1193.46px;font-size:16px;color:#80708F;font-weight:400;letter-spacing:0.2px">Terms of Use</div><div class="t" style="left:1475.50px;top:1193.46px;font-size:16px;color:#80708F;font-weight:400;">API</div><div class="t" style="left:1517.00px;top:1193.46px;font-size:16px;color:#80708F;font-weight:400;">Docs</div><div class="t" style="left:1569.50px;top:1193.46px;font-size:16px;color:#80708F;font-weight:400;letter-spacing:0.7px">Contribute</div><svg style="position:absolute;left:920px;top:1175px;" width="50" height="45" viewBox="0 0 50 45"><path d="M17.1 33.45 L15.28 36.63 Q14.23 39.19 16.5 39.19 L24.82 39.19 Q24.21 32.38 19.52 29.66 L21.79 24.82 Q29.96 29.06 30.27 39.19 L35.71 39.19 Q34.8 26.63 25.12 19.98 L28.6 13.77 Q29.96 11.65 31.33 13.77 L44.64 36.78 Q45.55 39.19 43.28 39.19 L40.1 39.19" fill="none" stroke="#80708F" stroke-width="2.4" stroke-linejoin="round"/></svg>
</div></body></html>
